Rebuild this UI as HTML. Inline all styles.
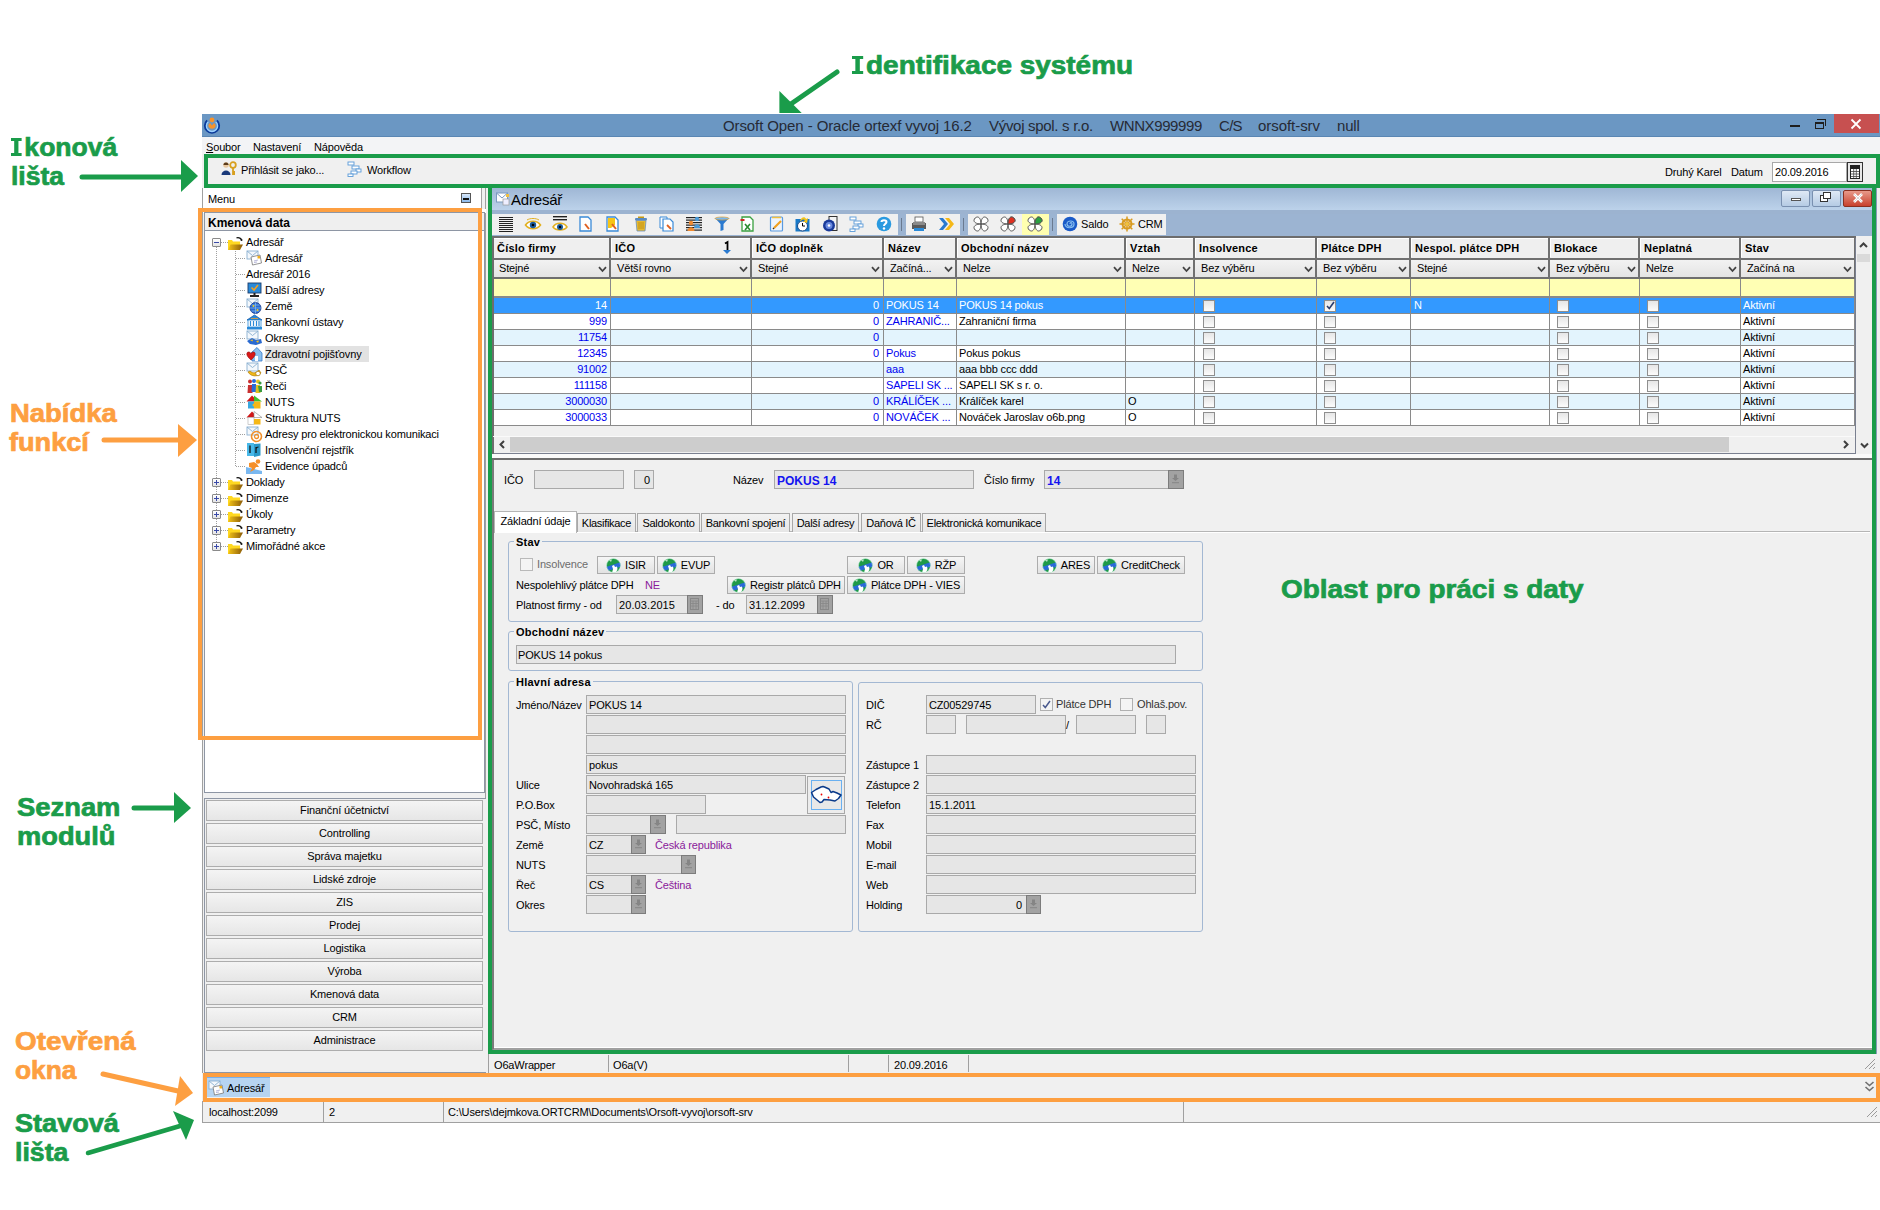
<!DOCTYPE html><html><head><meta charset="utf-8"><style>
html,body{margin:0;padding:0;width:1880px;height:1210px;overflow:hidden;background:#fff;font-family:'Liberation Sans', sans-serif;}
.a{position:absolute;box-sizing:border-box}
.t{white-space:pre}
svg{position:absolute;overflow:visible}
</style></head><body>
<div class="a" style="left:202px;top:114px;width:1678px;height:23px;background:#6b97c3;border-bottom:1px solid #5a86b3"></div>
<svg class="a" style="left:203px;top:116px" width="18" height="18" viewBox="0 0 18 18">
<path d="M4.2 4.5A7 7 0 1 0 13.8 4.5" fill="none" stroke="#0a3a9a" stroke-width="2.2"/>
<path d="M5.2 5.8A5.6 5.6 0 1 0 12.8 5.8" fill="none" stroke="#9ad0ff" stroke-width="1.4"/>
<path d="M5.3 9.8A3.8 3.8 0 0 0 12.7 9.8A3.8 3.8 0 0 0 11 7L9 9.5L7 7A3.8 3.8 0 0 0 5.3 9.8Z" fill="#f7922a"/>
<circle cx="9" cy="4" r="2.4" fill="#f7922a"/></svg>
<div class="a t" style="left:723px;top:118px;font-size:15px;line-height:15px;font-weight:400;color:#262a35;letter-spacing:-0.1px">Orsoft Open - Oracle ortexf vyvoj 16.2</div>
<div class="a t" style="left:989px;top:118px;font-size:15px;line-height:15px;font-weight:400;color:#262a35;letter-spacing:-0.3px">Vývoj spol. s r.o.</div>
<div class="a t" style="left:1110px;top:118px;font-size:15px;line-height:15px;font-weight:400;color:#262a35;letter-spacing:-0.4px">WNNX999999</div>
<div class="a t" style="left:1219px;top:118px;font-size:15px;line-height:15px;font-weight:400;color:#262a35;letter-spacing:-0.7px">C/S</div>
<div class="a t" style="left:1258px;top:118px;font-size:15px;line-height:15px;font-weight:400;color:#262a35;letter-spacing:-0.05px">orsoft-srv</div>
<div class="a t" style="left:1337px;top:118px;font-size:15px;line-height:15px;font-weight:400;color:#262a35;letter-spacing:-0.2px">null</div>
<div class="a" style="left:1790px;top:125px;width:10px;height:2px;background:#1e1e1e"></div>
<div class="a" style="left:1815px;top:122px;width:9px;height:7px;border:1px solid #1e1e1e;border-top-width:2px"></div>
<div class="a" style="left:1817px;top:119px;width:9px;height:7px;border-top:1px solid #1e1e1e;border-right:1px solid #1e1e1e"></div>
<div class="a" style="left:1834px;top:114px;width:45px;height:19px;background:#c75050"></div>
<svg class="a" style="left:1850px;top:118px" width="12" height="12" viewBox="0 0 12 12"><path d="M1.5 1.5L10.5 10.5M10.5 1.5L1.5 10.5" stroke="#fff" stroke-width="1.8"/></svg>
<div class="a" style="left:202px;top:137px;width:1678px;height:17px;background:#f3f4f6"></div>
<div class="a t" style="left:206px;top:142px;font-size:11px;line-height:11px;font-weight:400;color:#000;letter-spacing:-0.15px;"><u>S</u>oubor</div>
<div class="a t" style="left:253px;top:142px;font-size:11px;line-height:11px;font-weight:400;color:#000;letter-spacing:-0.15px;">Nastavení</div>
<div class="a t" style="left:314px;top:142px;font-size:11px;line-height:11px;font-weight:400;color:#000;letter-spacing:-0.15px;">Nápověda</div>
<div class="a" style="left:202px;top:154px;width:1678px;height:34px;background:#f0f0f0"></div>
<div class="a t" style="left:241px;top:165px;font-size:11px;line-height:11px;font-weight:400;color:#000;letter-spacing:-0.15px;">Přihlásit se jako...</div>
<div class="a t" style="left:367px;top:165px;font-size:11px;line-height:11px;font-weight:400;color:#000;letter-spacing:-0.15px;">Workflow</div>
<div class="a t" style="left:1665px;top:167px;font-size:11px;line-height:11px;font-weight:400;color:#000;letter-spacing:-0.15px;">Druhý Karel</div>
<div class="a t" style="left:1731px;top:167px;font-size:11px;line-height:11px;font-weight:400;color:#000;letter-spacing:-0.15px;">Datum</div>
<div class="a" style="left:1772px;top:162px;width:75px;height:20px;background:#fff;border:1px solid #a8a8a8"></div>
<div class="a t" style="left:1775px;top:167px;font-size:11px;line-height:11px;font-weight:400;color:#000;letter-spacing:-0.15px;">20.09.2016</div>
<div class="a" style="left:1847px;top:162px;width:16px;height:20px;background:#e8e8e8;border:1px solid #333"></div>
<div class="a" style="left:202px;top:188px;width:1678px;height:935px;background:#f0f0f0"></div>
<div class="a" style="left:202px;top:188px;width:284px;height:885px;background:#f0f0f0;border-left:1px solid #a0a0a0;border-right:1px solid #a0a0a0"></div>
<div class="a" style="left:203px;top:188px;width:279px;height:21px;background:#fff;border-right:1px solid #a0a0a0"></div>
<div class="a t" style="left:208px;top:194px;font-size:11px;line-height:11px;font-weight:400;color:#000;letter-spacing:-0.15px;">Menu</div>
<div class="a" style="left:461px;top:193px;width:10px;height:10px;background:linear-gradient(#d8e8fa,#8ab8ea);border:1px solid #555"></div>
<div class="a" style="left:463px;top:198px;width:6px;height:2px;background:#111"></div>
<div class="a" style="left:203px;top:209px;width:283px;height:4px;background:#fff"></div>
<div class="a" style="left:204px;top:212px;width:281px;height:581px;background:#fff;border:1px solid #8e96a4"></div>
<div class="a" style="left:205px;top:213px;width:279px;height:18px;background:#efefef;border-bottom:1px solid #8e96a4"></div>
<div class="a t" style="left:208px;top:217px;font-size:12px;line-height:12px;font-weight:700;color:#000;">Kmenová data</div>
<div class="a" style="left:204px;top:798px;width:282px;height:275px;background:#f0f0f0;border:1px solid #8e96a4;border-right:none"></div>
<div class="a" style="left:206px;top:800px;width:277px;height:21px;background:linear-gradient(#f4f4f4,#e6e6e6);border:1px solid #adadad"></div>
<div class="a t" style="left:206px;top:805px;width:277px;text-align:center;font-size:11px;line-height:11px;font-weight:400;color:#000;letter-spacing:-0.15px;">Finanční účetnictví</div>
<div class="a" style="left:206px;top:823px;width:277px;height:21px;background:linear-gradient(#f4f4f4,#e6e6e6);border:1px solid #adadad"></div>
<div class="a t" style="left:206px;top:828px;width:277px;text-align:center;font-size:11px;line-height:11px;font-weight:400;color:#000;letter-spacing:-0.15px;">Controlling</div>
<div class="a" style="left:206px;top:846px;width:277px;height:21px;background:linear-gradient(#f4f4f4,#e6e6e6);border:1px solid #adadad"></div>
<div class="a t" style="left:206px;top:851px;width:277px;text-align:center;font-size:11px;line-height:11px;font-weight:400;color:#000;letter-spacing:-0.15px;">Správa majetku</div>
<div class="a" style="left:206px;top:869px;width:277px;height:21px;background:linear-gradient(#f4f4f4,#e6e6e6);border:1px solid #adadad"></div>
<div class="a t" style="left:206px;top:874px;width:277px;text-align:center;font-size:11px;line-height:11px;font-weight:400;color:#000;letter-spacing:-0.15px;">Lidské zdroje</div>
<div class="a" style="left:206px;top:892px;width:277px;height:21px;background:linear-gradient(#f4f4f4,#e6e6e6);border:1px solid #adadad"></div>
<div class="a t" style="left:206px;top:897px;width:277px;text-align:center;font-size:11px;line-height:11px;font-weight:400;color:#000;letter-spacing:-0.15px;">ZIS</div>
<div class="a" style="left:206px;top:915px;width:277px;height:21px;background:linear-gradient(#f4f4f4,#e6e6e6);border:1px solid #adadad"></div>
<div class="a t" style="left:206px;top:920px;width:277px;text-align:center;font-size:11px;line-height:11px;font-weight:400;color:#000;letter-spacing:-0.15px;">Prodej</div>
<div class="a" style="left:206px;top:938px;width:277px;height:21px;background:linear-gradient(#f4f4f4,#e6e6e6);border:1px solid #adadad"></div>
<div class="a t" style="left:206px;top:943px;width:277px;text-align:center;font-size:11px;line-height:11px;font-weight:400;color:#000;letter-spacing:-0.15px;">Logistika</div>
<div class="a" style="left:206px;top:961px;width:277px;height:21px;background:linear-gradient(#f4f4f4,#e6e6e6);border:1px solid #adadad"></div>
<div class="a t" style="left:206px;top:966px;width:277px;text-align:center;font-size:11px;line-height:11px;font-weight:400;color:#000;letter-spacing:-0.15px;">Výroba</div>
<div class="a" style="left:206px;top:984px;width:277px;height:21px;background:linear-gradient(#f4f4f4,#e6e6e6);border:1px solid #adadad"></div>
<div class="a t" style="left:206px;top:989px;width:277px;text-align:center;font-size:11px;line-height:11px;font-weight:400;color:#000;letter-spacing:-0.15px;">Kmenová data</div>
<div class="a" style="left:206px;top:1007px;width:277px;height:21px;background:linear-gradient(#f4f4f4,#e6e6e6);border:1px solid #adadad"></div>
<div class="a t" style="left:206px;top:1012px;width:277px;text-align:center;font-size:11px;line-height:11px;font-weight:400;color:#000;letter-spacing:-0.15px;">CRM</div>
<div class="a" style="left:206px;top:1030px;width:277px;height:21px;background:linear-gradient(#f4f4f4,#e6e6e6);border:1px solid #adadad"></div>
<div class="a t" style="left:206px;top:1035px;width:277px;text-align:center;font-size:11px;line-height:11px;font-weight:400;color:#000;letter-spacing:-0.15px;">Administrace</div>
<div class="a" style="left:488px;top:188px;width:1392px;height:867px;background:#f0f0f0"></div>
<div class="a" style="left:492px;top:188px;width:1380px;height:22px;background:linear-gradient(#9fb7d5,#bcd2ea)"></div>
<div class="a" style="left:492px;top:210px;width:1380px;height:4px;background:#9cb3d0"></div>
<div class="a t" style="left:511px;top:192px;font-size:15px;line-height:15px;font-weight:400;color:#000;letter-spacing:-0.2px">Adresář</div>
<div class="a" style="left:1781px;top:190px;width:29px;height:17px;background:linear-gradient(#dfe9f5,#b5cbe4);border:1px solid #7990b0;border-radius:2px"></div>
<div class="a" style="left:1812px;top:190px;width:29px;height:17px;background:linear-gradient(#dfe9f5,#b5cbe4);border:1px solid #7990b0;border-radius:2px"></div>
<div class="a" style="left:1843px;top:190px;width:29px;height:17px;background:linear-gradient(#e89a8a,#c8412d);border:1px solid #8a3020;border-radius:2px"></div>
<div class="a" style="left:1791px;top:198px;width:10px;height:3px;background:#fff;border:1px solid #555"></div>
<svg class="a" style="left:1852px;top:192px" width="12" height="12" viewBox="0 0 12 12"><path d="M2 2L10 10M10 2L2 10" stroke="#fff" stroke-width="2.6"/><path d="M2 2L10 10M10 2L2 10" stroke="#333" stroke-width="0.6" opacity="0.3"/></svg>
<div class="a" style="left:1820px;top:195px;width:8px;height:7px;border:1px solid #333;background:#fff"></div>
<div class="a" style="left:1823px;top:192px;width:8px;height:7px;border:1px solid #333;background:#fff"></div>
<div class="a" style="left:492px;top:214px;width:1380px;height:24px;background:#9cb4d2;border-bottom:2px solid #6d6d6d"></div>
<div class="a" style="left:492px;top:214px;width:406px;height:21px;background:#f0f0f0"></div>
<div class="a" style="left:906px;top:214px;width:54px;height:21px;background:#f0f0f0"></div>
<div class="a" style="left:968px;top:214px;width:81px;height:21px;background:#f0f0f0"></div>
<div class="a" style="left:1057px;top:214px;width:109px;height:21px;background:#f0f0f0"></div>
<div class="a" style="left:492px;top:236px;width:1380px;height:222px;background:#f0f0f0"></div>
<div class="a" style="left:492px;top:236px;width:1364px;height:2px;background:#6d6d6d"></div>
<div class="a" style="left:493px;top:238px;width:1362px;height:22px;background:#efefef;border-bottom:2px solid #6f6f6f"></div>
<div class="a" style="left:493px;top:260px;width:1362px;height:19px;background:linear-gradient(#f2f2f2,#e4e4e4);border-bottom:2px solid #6f6f6f"></div>
<div class="a" style="left:493px;top:238px;width:1px;height:19px;background:#fff"></div>
<div class="a" style="left:493px;top:238px;width:117px;height:1px;background:#fff"></div>
<div class="a t" style="left:497px;top:243px;font-size:11px;line-height:11px;font-weight:700;color:#000;letter-spacing:0.2px;">Číslo firmy</div>
<div class="a t" style="left:499px;top:263px;font-size:11px;line-height:11px;font-weight:400;color:#000;letter-spacing:-0.15px;">Stejné</div>
<svg class="a" style="left:598px;top:266px" width="9" height="7" viewBox="0 0 9 7"><path d="M1 1.2L4.5 5L8 1.2" fill="none" stroke="#444" stroke-width="1.8"/></svg>
<div class="a" style="left:611px;top:238px;width:1px;height:19px;background:#fff"></div>
<div class="a" style="left:611px;top:238px;width:140px;height:1px;background:#fff"></div>
<div class="a" style="left:609px;top:238px;width:2px;height:41px;background:#707070"></div>
<div class="a t" style="left:615px;top:243px;font-size:11px;line-height:11px;font-weight:700;color:#000;letter-spacing:0.2px;">IČO</div>
<div class="a t" style="left:617px;top:263px;font-size:11px;line-height:11px;font-weight:400;color:#000;letter-spacing:-0.15px;">Větší rovno</div>
<svg class="a" style="left:739px;top:266px" width="9" height="7" viewBox="0 0 9 7"><path d="M1 1.2L4.5 5L8 1.2" fill="none" stroke="#444" stroke-width="1.8"/></svg>
<div class="a" style="left:752px;top:238px;width:1px;height:19px;background:#fff"></div>
<div class="a" style="left:752px;top:238px;width:131px;height:1px;background:#fff"></div>
<div class="a" style="left:750px;top:238px;width:2px;height:41px;background:#707070"></div>
<div class="a t" style="left:756px;top:243px;font-size:11px;line-height:11px;font-weight:700;color:#000;letter-spacing:0.2px;">IČO doplněk</div>
<div class="a t" style="left:758px;top:263px;font-size:11px;line-height:11px;font-weight:400;color:#000;letter-spacing:-0.15px;">Stejné</div>
<svg class="a" style="left:871px;top:266px" width="9" height="7" viewBox="0 0 9 7"><path d="M1 1.2L4.5 5L8 1.2" fill="none" stroke="#444" stroke-width="1.8"/></svg>
<div class="a" style="left:884px;top:238px;width:1px;height:19px;background:#fff"></div>
<div class="a" style="left:884px;top:238px;width:72px;height:1px;background:#fff"></div>
<div class="a" style="left:882px;top:238px;width:2px;height:41px;background:#707070"></div>
<div class="a t" style="left:888px;top:243px;font-size:11px;line-height:11px;font-weight:700;color:#000;letter-spacing:0.2px;">Název</div>
<div class="a t" style="left:890px;top:263px;font-size:11px;line-height:11px;font-weight:400;color:#000;letter-spacing:-0.15px;">Začíná...</div>
<svg class="a" style="left:944px;top:266px" width="9" height="7" viewBox="0 0 9 7"><path d="M1 1.2L4.5 5L8 1.2" fill="none" stroke="#444" stroke-width="1.8"/></svg>
<div class="a" style="left:957px;top:238px;width:1px;height:19px;background:#fff"></div>
<div class="a" style="left:957px;top:238px;width:168px;height:1px;background:#fff"></div>
<div class="a" style="left:955px;top:238px;width:2px;height:41px;background:#707070"></div>
<div class="a t" style="left:961px;top:243px;font-size:11px;line-height:11px;font-weight:700;color:#000;letter-spacing:0.2px;">Obchodní název</div>
<div class="a t" style="left:963px;top:263px;font-size:11px;line-height:11px;font-weight:400;color:#000;letter-spacing:-0.15px;">Nelze</div>
<svg class="a" style="left:1113px;top:266px" width="9" height="7" viewBox="0 0 9 7"><path d="M1 1.2L4.5 5L8 1.2" fill="none" stroke="#444" stroke-width="1.8"/></svg>
<div class="a" style="left:1126px;top:238px;width:1px;height:19px;background:#fff"></div>
<div class="a" style="left:1126px;top:238px;width:68px;height:1px;background:#fff"></div>
<div class="a" style="left:1124px;top:238px;width:2px;height:41px;background:#707070"></div>
<div class="a t" style="left:1130px;top:243px;font-size:11px;line-height:11px;font-weight:700;color:#000;letter-spacing:0.2px;">Vztah</div>
<div class="a t" style="left:1132px;top:263px;font-size:11px;line-height:11px;font-weight:400;color:#000;letter-spacing:-0.15px;">Nelze</div>
<svg class="a" style="left:1182px;top:266px" width="9" height="7" viewBox="0 0 9 7"><path d="M1 1.2L4.5 5L8 1.2" fill="none" stroke="#444" stroke-width="1.8"/></svg>
<div class="a" style="left:1195px;top:238px;width:1px;height:19px;background:#fff"></div>
<div class="a" style="left:1195px;top:238px;width:121px;height:1px;background:#fff"></div>
<div class="a" style="left:1193px;top:238px;width:2px;height:41px;background:#707070"></div>
<div class="a t" style="left:1199px;top:243px;font-size:11px;line-height:11px;font-weight:700;color:#000;letter-spacing:0.2px;">Insolvence</div>
<div class="a t" style="left:1201px;top:263px;font-size:11px;line-height:11px;font-weight:400;color:#000;letter-spacing:-0.15px;">Bez výběru</div>
<svg class="a" style="left:1304px;top:266px" width="9" height="7" viewBox="0 0 9 7"><path d="M1 1.2L4.5 5L8 1.2" fill="none" stroke="#444" stroke-width="1.8"/></svg>
<div class="a" style="left:1317px;top:238px;width:1px;height:19px;background:#fff"></div>
<div class="a" style="left:1317px;top:238px;width:93px;height:1px;background:#fff"></div>
<div class="a" style="left:1315px;top:238px;width:2px;height:41px;background:#707070"></div>
<div class="a t" style="left:1321px;top:243px;font-size:11px;line-height:11px;font-weight:700;color:#000;letter-spacing:0.2px;">Plátce DPH</div>
<div class="a t" style="left:1323px;top:263px;font-size:11px;line-height:11px;font-weight:400;color:#000;letter-spacing:-0.15px;">Bez výběru</div>
<svg class="a" style="left:1398px;top:266px" width="9" height="7" viewBox="0 0 9 7"><path d="M1 1.2L4.5 5L8 1.2" fill="none" stroke="#444" stroke-width="1.8"/></svg>
<div class="a" style="left:1411px;top:238px;width:1px;height:19px;background:#fff"></div>
<div class="a" style="left:1411px;top:238px;width:138px;height:1px;background:#fff"></div>
<div class="a" style="left:1409px;top:238px;width:2px;height:41px;background:#707070"></div>
<div class="a t" style="left:1415px;top:243px;font-size:11px;line-height:11px;font-weight:700;color:#000;letter-spacing:0.2px;">Nespol. plátce DPH</div>
<div class="a t" style="left:1417px;top:263px;font-size:11px;line-height:11px;font-weight:400;color:#000;letter-spacing:-0.15px;">Stejné</div>
<svg class="a" style="left:1537px;top:266px" width="9" height="7" viewBox="0 0 9 7"><path d="M1 1.2L4.5 5L8 1.2" fill="none" stroke="#444" stroke-width="1.8"/></svg>
<div class="a" style="left:1550px;top:238px;width:1px;height:19px;background:#fff"></div>
<div class="a" style="left:1550px;top:238px;width:89px;height:1px;background:#fff"></div>
<div class="a" style="left:1548px;top:238px;width:2px;height:41px;background:#707070"></div>
<div class="a t" style="left:1554px;top:243px;font-size:11px;line-height:11px;font-weight:700;color:#000;letter-spacing:0.2px;">Blokace</div>
<div class="a t" style="left:1556px;top:263px;font-size:11px;line-height:11px;font-weight:400;color:#000;letter-spacing:-0.15px;">Bez výběru</div>
<svg class="a" style="left:1627px;top:266px" width="9" height="7" viewBox="0 0 9 7"><path d="M1 1.2L4.5 5L8 1.2" fill="none" stroke="#444" stroke-width="1.8"/></svg>
<div class="a" style="left:1640px;top:238px;width:1px;height:19px;background:#fff"></div>
<div class="a" style="left:1640px;top:238px;width:100px;height:1px;background:#fff"></div>
<div class="a" style="left:1638px;top:238px;width:2px;height:41px;background:#707070"></div>
<div class="a t" style="left:1644px;top:243px;font-size:11px;line-height:11px;font-weight:700;color:#000;letter-spacing:0.2px;">Neplatná</div>
<div class="a t" style="left:1646px;top:263px;font-size:11px;line-height:11px;font-weight:400;color:#000;letter-spacing:-0.15px;">Nelze</div>
<svg class="a" style="left:1728px;top:266px" width="9" height="7" viewBox="0 0 9 7"><path d="M1 1.2L4.5 5L8 1.2" fill="none" stroke="#444" stroke-width="1.8"/></svg>
<div class="a" style="left:1741px;top:238px;width:1px;height:19px;background:#fff"></div>
<div class="a" style="left:1741px;top:238px;width:114px;height:1px;background:#fff"></div>
<div class="a" style="left:1739px;top:238px;width:2px;height:41px;background:#707070"></div>
<div class="a t" style="left:1745px;top:243px;font-size:11px;line-height:11px;font-weight:700;color:#000;letter-spacing:0.2px;">Stav</div>
<div class="a t" style="left:1747px;top:263px;font-size:11px;line-height:11px;font-weight:400;color:#000;letter-spacing:-0.15px;">Začíná na</div>
<svg class="a" style="left:1843px;top:266px" width="9" height="7" viewBox="0 0 9 7"><path d="M1 1.2L4.5 5L8 1.2" fill="none" stroke="#444" stroke-width="1.8"/></svg>
<div class="a" style="left:1854px;top:238px;width:2px;height:41px;background:#707070"></div>
<svg class="a" style="left:722px;top:241px" width="10" height="15" viewBox="0 0 10 15"><path d="M3 2.5L5.5 1V9" fill="none" stroke="#000" stroke-width="1.8"/><path d="M1 9H9L5 13Z" fill="#2a7ad0"/></svg>
<div class="a" style="left:493px;top:279px;width:1362px;height:19px;background:#ffffb4;border-bottom:2px solid #8a8a8a"></div>
<div class="a" style="left:493px;top:298px;width:1362px;height:16px;background:#8a8a8a"></div>
<div class="a" style="left:493px;top:298px;width:1362px;height:15px;background:#3399ff"></div>
<div class="a t" style="right:1273px;top:300px;text-align:right;font-size:11px;line-height:11px;font-weight:400;color:#fff;letter-spacing:-0.15px;">14</div>
<div class="a t" style="right:1001px;top:300px;text-align:right;font-size:11px;line-height:11px;font-weight:400;color:#fff;letter-spacing:-0.15px;">0</div>
<div class="a t" style="left:886px;top:300px;font-size:11px;line-height:11px;font-weight:400;color:#fff;letter-spacing:-0.15px;">POKUS 14</div>
<div class="a t" style="left:959px;top:300px;font-size:11px;line-height:11px;font-weight:400;color:#fff;letter-spacing:-0.15px;">POKUS 14 pokus</div>
<div class="a t" style="left:1414px;top:300px;font-size:11px;line-height:11px;font-weight:400;color:#fff;letter-spacing:-0.15px;">N</div>
<div class="a t" style="left:1743px;top:300px;font-size:11px;line-height:11px;font-weight:400;color:#fff;letter-spacing:-0.15px;">Aktivní</div>
<div class="a" style="left:1203px;top:300px;width:12px;height:12px;background:linear-gradient(#e6e6e6,#fcfcfc);border:1px solid #8f8f8f"></div>
<div class="a" style="left:1324px;top:300px;width:12px;height:12px;background:linear-gradient(#e6e6e6,#fcfcfc);border:1px solid #8f8f8f"></div>
<svg class="a" style="left:1326px;top:301px" width="9" height="9" viewBox="0 0 9 9"><path d="M1 5L3.3 7.5L8 1" fill="none" stroke="#2a3c6e" stroke-width="1.6"/></svg>
<div class="a" style="left:1557px;top:300px;width:12px;height:12px;background:linear-gradient(#e6e6e6,#fcfcfc);border:1px solid #8f8f8f"></div>
<div class="a" style="left:1647px;top:300px;width:12px;height:12px;background:linear-gradient(#e6e6e6,#fcfcfc);border:1px solid #8f8f8f"></div>
<div class="a" style="left:493px;top:314px;width:1362px;height:16px;background:#8a8a8a"></div>
<div class="a" style="left:493px;top:314px;width:1362px;height:15px;background:#ffffff"></div>
<div class="a t" style="right:1273px;top:316px;text-align:right;font-size:11px;line-height:11px;font-weight:400;color:#0000f0;letter-spacing:-0.15px;">999</div>
<div class="a t" style="right:1001px;top:316px;text-align:right;font-size:11px;line-height:11px;font-weight:400;color:#0000f0;letter-spacing:-0.15px;">0</div>
<div class="a t" style="left:886px;top:316px;font-size:11px;line-height:11px;font-weight:400;color:#0000f0;letter-spacing:-0.15px;">ZAHRANIČ...</div>
<div class="a t" style="left:959px;top:316px;font-size:11px;line-height:11px;font-weight:400;color:#000;letter-spacing:-0.15px;">Zahraniční firma</div>
<div class="a t" style="left:1743px;top:316px;font-size:11px;line-height:11px;font-weight:400;color:#000;letter-spacing:-0.15px;">Aktivní</div>
<div class="a" style="left:1203px;top:316px;width:12px;height:12px;background:linear-gradient(#e6e6e6,#fcfcfc);border:1px solid #8f8f8f"></div>
<div class="a" style="left:1324px;top:316px;width:12px;height:12px;background:linear-gradient(#e6e6e6,#fcfcfc);border:1px solid #8f8f8f"></div>
<div class="a" style="left:1557px;top:316px;width:12px;height:12px;background:linear-gradient(#e6e6e6,#fcfcfc);border:1px solid #8f8f8f"></div>
<div class="a" style="left:1647px;top:316px;width:12px;height:12px;background:linear-gradient(#e6e6e6,#fcfcfc);border:1px solid #8f8f8f"></div>
<div class="a" style="left:493px;top:330px;width:1362px;height:16px;background:#8a8a8a"></div>
<div class="a" style="left:493px;top:330px;width:1362px;height:15px;background:#e3f4fd"></div>
<div class="a t" style="right:1273px;top:332px;text-align:right;font-size:11px;line-height:11px;font-weight:400;color:#0000f0;letter-spacing:-0.15px;">11754</div>
<div class="a t" style="right:1001px;top:332px;text-align:right;font-size:11px;line-height:11px;font-weight:400;color:#0000f0;letter-spacing:-0.15px;">0</div>
<div class="a t" style="left:1743px;top:332px;font-size:11px;line-height:11px;font-weight:400;color:#000;letter-spacing:-0.15px;">Aktivní</div>
<div class="a" style="left:1203px;top:332px;width:12px;height:12px;background:linear-gradient(#e6e6e6,#fcfcfc);border:1px solid #8f8f8f"></div>
<div class="a" style="left:1324px;top:332px;width:12px;height:12px;background:linear-gradient(#e6e6e6,#fcfcfc);border:1px solid #8f8f8f"></div>
<div class="a" style="left:1557px;top:332px;width:12px;height:12px;background:linear-gradient(#e6e6e6,#fcfcfc);border:1px solid #8f8f8f"></div>
<div class="a" style="left:1647px;top:332px;width:12px;height:12px;background:linear-gradient(#e6e6e6,#fcfcfc);border:1px solid #8f8f8f"></div>
<div class="a" style="left:493px;top:346px;width:1362px;height:16px;background:#8a8a8a"></div>
<div class="a" style="left:493px;top:346px;width:1362px;height:15px;background:#ffffff"></div>
<div class="a t" style="right:1273px;top:348px;text-align:right;font-size:11px;line-height:11px;font-weight:400;color:#0000f0;letter-spacing:-0.15px;">12345</div>
<div class="a t" style="right:1001px;top:348px;text-align:right;font-size:11px;line-height:11px;font-weight:400;color:#0000f0;letter-spacing:-0.15px;">0</div>
<div class="a t" style="left:886px;top:348px;font-size:11px;line-height:11px;font-weight:400;color:#0000f0;letter-spacing:-0.15px;">Pokus</div>
<div class="a t" style="left:959px;top:348px;font-size:11px;line-height:11px;font-weight:400;color:#000;letter-spacing:-0.15px;">Pokus pokus</div>
<div class="a t" style="left:1743px;top:348px;font-size:11px;line-height:11px;font-weight:400;color:#000;letter-spacing:-0.15px;">Aktivní</div>
<div class="a" style="left:1203px;top:348px;width:12px;height:12px;background:linear-gradient(#e6e6e6,#fcfcfc);border:1px solid #8f8f8f"></div>
<div class="a" style="left:1324px;top:348px;width:12px;height:12px;background:linear-gradient(#e6e6e6,#fcfcfc);border:1px solid #8f8f8f"></div>
<div class="a" style="left:1557px;top:348px;width:12px;height:12px;background:linear-gradient(#e6e6e6,#fcfcfc);border:1px solid #8f8f8f"></div>
<div class="a" style="left:1647px;top:348px;width:12px;height:12px;background:linear-gradient(#e6e6e6,#fcfcfc);border:1px solid #8f8f8f"></div>
<div class="a" style="left:493px;top:362px;width:1362px;height:16px;background:#8a8a8a"></div>
<div class="a" style="left:493px;top:362px;width:1362px;height:15px;background:#e3f4fd"></div>
<div class="a t" style="right:1273px;top:364px;text-align:right;font-size:11px;line-height:11px;font-weight:400;color:#0000f0;letter-spacing:-0.15px;">91002</div>
<div class="a t" style="left:886px;top:364px;font-size:11px;line-height:11px;font-weight:400;color:#0000f0;letter-spacing:-0.15px;">aaa</div>
<div class="a t" style="left:959px;top:364px;font-size:11px;line-height:11px;font-weight:400;color:#000;letter-spacing:-0.15px;">aaa bbb ccc ddd</div>
<div class="a t" style="left:1743px;top:364px;font-size:11px;line-height:11px;font-weight:400;color:#000;letter-spacing:-0.15px;">Aktivní</div>
<div class="a" style="left:1203px;top:364px;width:12px;height:12px;background:linear-gradient(#e6e6e6,#fcfcfc);border:1px solid #8f8f8f"></div>
<div class="a" style="left:1324px;top:364px;width:12px;height:12px;background:linear-gradient(#e6e6e6,#fcfcfc);border:1px solid #8f8f8f"></div>
<div class="a" style="left:1557px;top:364px;width:12px;height:12px;background:linear-gradient(#e6e6e6,#fcfcfc);border:1px solid #8f8f8f"></div>
<div class="a" style="left:1647px;top:364px;width:12px;height:12px;background:linear-gradient(#e6e6e6,#fcfcfc);border:1px solid #8f8f8f"></div>
<div class="a" style="left:493px;top:378px;width:1362px;height:16px;background:#8a8a8a"></div>
<div class="a" style="left:493px;top:378px;width:1362px;height:15px;background:#ffffff"></div>
<div class="a t" style="right:1273px;top:380px;text-align:right;font-size:11px;line-height:11px;font-weight:400;color:#0000f0;letter-spacing:-0.15px;">111158</div>
<div class="a t" style="left:886px;top:380px;font-size:11px;line-height:11px;font-weight:400;color:#0000f0;letter-spacing:-0.15px;">SAPELI SK ...</div>
<div class="a t" style="left:959px;top:380px;font-size:11px;line-height:11px;font-weight:400;color:#000;letter-spacing:-0.15px;">SAPELI SK s r. o.</div>
<div class="a t" style="left:1743px;top:380px;font-size:11px;line-height:11px;font-weight:400;color:#000;letter-spacing:-0.15px;">Aktivní</div>
<div class="a" style="left:1203px;top:380px;width:12px;height:12px;background:linear-gradient(#e6e6e6,#fcfcfc);border:1px solid #8f8f8f"></div>
<div class="a" style="left:1324px;top:380px;width:12px;height:12px;background:linear-gradient(#e6e6e6,#fcfcfc);border:1px solid #8f8f8f"></div>
<div class="a" style="left:1557px;top:380px;width:12px;height:12px;background:linear-gradient(#e6e6e6,#fcfcfc);border:1px solid #8f8f8f"></div>
<div class="a" style="left:1647px;top:380px;width:12px;height:12px;background:linear-gradient(#e6e6e6,#fcfcfc);border:1px solid #8f8f8f"></div>
<div class="a" style="left:493px;top:394px;width:1362px;height:16px;background:#8a8a8a"></div>
<div class="a" style="left:493px;top:394px;width:1362px;height:15px;background:#e3f4fd"></div>
<div class="a t" style="right:1273px;top:396px;text-align:right;font-size:11px;line-height:11px;font-weight:400;color:#0000f0;letter-spacing:-0.15px;">3000030</div>
<div class="a t" style="right:1001px;top:396px;text-align:right;font-size:11px;line-height:11px;font-weight:400;color:#0000f0;letter-spacing:-0.15px;">0</div>
<div class="a t" style="left:886px;top:396px;font-size:11px;line-height:11px;font-weight:400;color:#0000f0;letter-spacing:-0.15px;">KRÁLÍČEK ...</div>
<div class="a t" style="left:959px;top:396px;font-size:11px;line-height:11px;font-weight:400;color:#000;letter-spacing:-0.15px;">Králíček karel</div>
<div class="a t" style="left:1128px;top:396px;font-size:11px;line-height:11px;font-weight:400;color:#000;letter-spacing:-0.15px;">O</div>
<div class="a t" style="left:1743px;top:396px;font-size:11px;line-height:11px;font-weight:400;color:#000;letter-spacing:-0.15px;">Aktivní</div>
<div class="a" style="left:1203px;top:396px;width:12px;height:12px;background:linear-gradient(#e6e6e6,#fcfcfc);border:1px solid #8f8f8f"></div>
<div class="a" style="left:1324px;top:396px;width:12px;height:12px;background:linear-gradient(#e6e6e6,#fcfcfc);border:1px solid #8f8f8f"></div>
<div class="a" style="left:1557px;top:396px;width:12px;height:12px;background:linear-gradient(#e6e6e6,#fcfcfc);border:1px solid #8f8f8f"></div>
<div class="a" style="left:1647px;top:396px;width:12px;height:12px;background:linear-gradient(#e6e6e6,#fcfcfc);border:1px solid #8f8f8f"></div>
<div class="a" style="left:493px;top:410px;width:1362px;height:16px;background:#8a8a8a"></div>
<div class="a" style="left:493px;top:410px;width:1362px;height:15px;background:#ffffff"></div>
<div class="a t" style="right:1273px;top:412px;text-align:right;font-size:11px;line-height:11px;font-weight:400;color:#0000f0;letter-spacing:-0.15px;">3000033</div>
<div class="a t" style="right:1001px;top:412px;text-align:right;font-size:11px;line-height:11px;font-weight:400;color:#0000f0;letter-spacing:-0.15px;">0</div>
<div class="a t" style="left:886px;top:412px;font-size:11px;line-height:11px;font-weight:400;color:#0000f0;letter-spacing:-0.15px;">NOVÁČEK ...</div>
<div class="a t" style="left:959px;top:412px;font-size:11px;line-height:11px;font-weight:400;color:#000;letter-spacing:-0.15px;">Nováček Jaroslav o6b.png</div>
<div class="a t" style="left:1128px;top:412px;font-size:11px;line-height:11px;font-weight:400;color:#000;letter-spacing:-0.15px;">O</div>
<div class="a t" style="left:1743px;top:412px;font-size:11px;line-height:11px;font-weight:400;color:#000;letter-spacing:-0.15px;">Aktivní</div>
<div class="a" style="left:1203px;top:412px;width:12px;height:12px;background:linear-gradient(#e6e6e6,#fcfcfc);border:1px solid #8f8f8f"></div>
<div class="a" style="left:1324px;top:412px;width:12px;height:12px;background:linear-gradient(#e6e6e6,#fcfcfc);border:1px solid #8f8f8f"></div>
<div class="a" style="left:1557px;top:412px;width:12px;height:12px;background:linear-gradient(#e6e6e6,#fcfcfc);border:1px solid #8f8f8f"></div>
<div class="a" style="left:1647px;top:412px;width:12px;height:12px;background:linear-gradient(#e6e6e6,#fcfcfc);border:1px solid #8f8f8f"></div>
<div class="a" style="left:610px;top:279px;width:1px;height:146px;background:#8a8a8a"></div>
<div class="a" style="left:751px;top:279px;width:1px;height:146px;background:#8a8a8a"></div>
<div class="a" style="left:883px;top:279px;width:1px;height:146px;background:#8a8a8a"></div>
<div class="a" style="left:956px;top:279px;width:1px;height:146px;background:#8a8a8a"></div>
<div class="a" style="left:1125px;top:279px;width:1px;height:146px;background:#8a8a8a"></div>
<div class="a" style="left:1194px;top:279px;width:1px;height:146px;background:#8a8a8a"></div>
<div class="a" style="left:1316px;top:279px;width:1px;height:146px;background:#8a8a8a"></div>
<div class="a" style="left:1410px;top:279px;width:1px;height:146px;background:#8a8a8a"></div>
<div class="a" style="left:1549px;top:279px;width:1px;height:146px;background:#8a8a8a"></div>
<div class="a" style="left:1639px;top:279px;width:1px;height:146px;background:#8a8a8a"></div>
<div class="a" style="left:1740px;top:279px;width:1px;height:146px;background:#8a8a8a"></div>
<div class="a" style="left:1854px;top:279px;width:1px;height:146px;background:#8a8a8a"></div>
<div class="a" style="left:493px;top:437px;width:1362px;height:15px;background:#f0f0f0"></div>
<div class="a" style="left:510px;top:437px;width:1219px;height:15px;background:#cdcdcd"></div>
<svg class="a" style="left:498px;top:440px" width="8" height="9" viewBox="0 0 8 9"><path d="M6 1L2.5 4.5L6 8" fill="none" stroke="#404040" stroke-width="2"/></svg>
<svg class="a" style="left:1842px;top:440px" width="8" height="9" viewBox="0 0 8 9"><path d="M2 1L5.5 4.5L2 8" fill="none" stroke="#404040" stroke-width="2"/></svg>
<div class="a" style="left:1856px;top:238px;width:15px;height:214px;background:#f0f0f0"></div>
<div class="a" style="left:1857px;top:254px;width:13px;height:8px;background:#dadada"></div>
<svg class="a" style="left:1859px;top:241px" width="9" height="8" viewBox="0 0 9 8"><path d="M1 6L4.5 2.5L8 6" fill="none" stroke="#404040" stroke-width="2"/></svg>
<svg class="a" style="left:1860px;top:442px" width="9" height="8" viewBox="0 0 9 8"><path d="M1 1.5L4.5 5L8 1.5" fill="none" stroke="#404040" stroke-width="2"/></svg>
<div class="a" style="left:492px;top:454px;width:1380px;height:6px;background:#fafafa;border-bottom:2px solid #6d6d6d"></div>
<div class="a" style="left:493px;top:453px;width:1363px;height:1px;background:#7a8090"></div>
<div class="a" style="left:492px;top:236px;width:2px;height:218px;background:#6d6d6d"></div>
<div class="a" style="left:1855px;top:238px;width:1px;height:216px;background:#7a8090"></div>
<div class="a" style="left:493px;top:436px;width:1362px;height:1px;background:#fafafa"></div>
<div class="a" style="left:1876px;top:188px;width:1px;height:866px;background:#8a9ab8"></div>
<div class="a" style="left:492px;top:460px;width:1380px;height:590px;background:#f0f0f0;border-left:2px solid #7a7a7a;border-bottom:1px solid #a0a0a0"></div>
<div class="a t" style="left:504px;top:475px;font-size:11px;line-height:11px;font-weight:400;color:#000;letter-spacing:-0.15px;">IČO</div>
<div class="a" style="left:534px;top:470px;width:90px;height:19px;background:#e6e6e6;border:1px solid #a9a9a9"></div>
<div class="a" style="left:634px;top:470px;width:20px;height:19px;background:#e6e6e6;border:1px solid #a9a9a9"></div>
<div class="a t" style="right:1230px;top:475px;text-align:right;font-size:11px;line-height:11px;font-weight:400;color:#000;letter-spacing:-0.15px;">0</div>
<div class="a t" style="left:733px;top:475px;font-size:11px;line-height:11px;font-weight:400;color:#000;letter-spacing:-0.15px;">Název</div>
<div class="a" style="left:774px;top:470px;width:200px;height:19px;background:#e6e6e6;border:1px solid #a9a9a9"></div>
<div class="a t" style="left:777px;top:475px;font-size:12px;line-height:12px;font-weight:700;color:#1414f0;">POKUS 14</div>
<div class="a t" style="left:984px;top:475px;font-size:11px;line-height:11px;font-weight:400;color:#000;letter-spacing:-0.15px;">Číslo firmy</div>
<div class="a" style="left:1044px;top:470px;width:125px;height:19px;background:#e6e6e6;border:1px solid #a9a9a9"></div>
<div class="a" style="left:1168px;top:470px;width:16px;height:19px;background:#a2a2a2;border:1px solid #7c7c7c"></div>
<svg class="a" style="left:1170px;top:474px" width="11" height="10" viewBox="0 0 11 10"><path d="M4 0.5H7V4H9L5.5 7L2 4H4Z" fill="#858585"/><path d="M2 8.7H9" stroke="#858585" stroke-width="1"/></svg>
<div class="a t" style="left:1047px;top:475px;font-size:12px;line-height:12px;font-weight:700;color:#1414f0;">14</div>
<div class="a" style="left:494px;top:531px;width:1376px;height:1px;background:#b5b5b5"></div>
<div class="a" style="left:494px;top:532px;width:1376px;height:515px;background:#f0f0f0;border-top:1px solid #fff"></div>
<div class="a" style="left:494px;top:1047px;width:1378px;height:1px;background:#fff"></div>
<div class="a" style="left:494px;top:1048px;width:1378px;height:2px;background:#a0a0a0"></div>
<div class="a" style="left:494px;top:511px;width:83px;height:22px;background:#fff;border:1px solid #b5b5b5;border-bottom:none"></div>
<div class="a t" style="left:494px;top:516px;width:83px;text-align:center;font-size:11px;line-height:11px;font-weight:400;color:#000;letter-spacing:-0.15px;">Základní údaje</div>
<div class="a" style="left:577px;top:513px;width:59px;height:19px;background:linear-gradient(#f2f2f2,#e6e6e6);border:1px solid #a8a8a8;border-bottom:none"></div>
<div class="a t" style="left:577px;top:518px;width:59px;text-align:center;font-size:11px;line-height:11px;font-weight:400;color:#000;letter-spacing:-0.15px;letter-spacing:-0.3px">Klasifikace</div>
<div class="a" style="left:637px;top:513px;width:63px;height:19px;background:linear-gradient(#f2f2f2,#e6e6e6);border:1px solid #a8a8a8;border-bottom:none"></div>
<div class="a t" style="left:637px;top:518px;width:63px;text-align:center;font-size:11px;line-height:11px;font-weight:400;color:#000;letter-spacing:-0.15px;letter-spacing:-0.3px">Saldokonto</div>
<div class="a" style="left:701px;top:513px;width:89px;height:19px;background:linear-gradient(#f2f2f2,#e6e6e6);border:1px solid #a8a8a8;border-bottom:none"></div>
<div class="a t" style="left:701px;top:518px;width:89px;text-align:center;font-size:11px;line-height:11px;font-weight:400;color:#000;letter-spacing:-0.15px;letter-spacing:-0.3px">Bankovní spojení</div>
<div class="a" style="left:792px;top:513px;width:67px;height:19px;background:linear-gradient(#f2f2f2,#e6e6e6);border:1px solid #a8a8a8;border-bottom:none"></div>
<div class="a t" style="left:792px;top:518px;width:67px;text-align:center;font-size:11px;line-height:11px;font-weight:400;color:#000;letter-spacing:-0.15px;letter-spacing:-0.3px">Další adresy</div>
<div class="a" style="left:861px;top:513px;width:60px;height:19px;background:linear-gradient(#f2f2f2,#e6e6e6);border:1px solid #a8a8a8;border-bottom:none"></div>
<div class="a t" style="left:861px;top:518px;width:60px;text-align:center;font-size:11px;line-height:11px;font-weight:400;color:#000;letter-spacing:-0.15px;letter-spacing:-0.3px">Daňová IČ</div>
<div class="a" style="left:922px;top:513px;width:124px;height:19px;background:linear-gradient(#f2f2f2,#e6e6e6);border:1px solid #a8a8a8;border-bottom:none"></div>
<div class="a t" style="left:922px;top:518px;width:124px;text-align:center;font-size:11px;line-height:11px;font-weight:400;color:#000;letter-spacing:-0.15px;letter-spacing:-0.3px">Elektronická komunikace</div>
<div class="a" style="left:508px;top:541px;width:695px;height:81px;border:1px solid #a3b8d3;border-radius:3px"></div>
<div class="a t" style="left:514px;top:536px;padding:0 2px;background:#f0f0f0;font-size:11px;line-height:13px;font-weight:700;letter-spacing:0.25px;color:#000">Stav</div>
<div class="a" style="left:520px;top:558px;width:13px;height:13px;background:#f4f4f4;border:1px solid #b9b9b9"></div>
<div class="a t" style="left:537px;top:559px;font-size:11px;line-height:11px;font-weight:400;color:#6d6d6d;letter-spacing:-0.15px;">Insolvence</div>
<div class="a" style="left:597px;top:556px;width:58px;height:18px;background:linear-gradient(#f6f6f6,#e2e2e2);border:1px solid #acacac"></div>
<div class="a" style="left:597px;top:556px;width:58px;height:18px;display:flex;align-items:center;justify-content:center;gap:4px"><svg width="15" height="15" viewBox="0 0 15 15" style="position:static"><defs><clipPath id="gc"><circle cx="7.5" cy="7.5" r="7"/></clipPath></defs><g clip-path="url(#gc)"><rect width="15" height="15" fill="#1f9a48"/><path d="M0 9L15 4V8.5L0 13.5Z" fill="#2a6ad8"/><path d="M6 8L8 7L9 9L11 8.5L11.5 11L10 15H6L7 11Z" fill="#fff"/><path d="M3 2L6 1.5L5 4Z" fill="#fff" opacity="0.7"/></g><circle cx="7.5" cy="7.5" r="7" fill="none" stroke="#dfe" stroke-width="0.5"/></svg><span class="t" style="font-size:11px;line-height:13px;color:#000;letter-spacing:-0.15px;position:relative;top:0px">ISIR</span></div>
<div class="a" style="left:657px;top:556px;width:58px;height:18px;background:linear-gradient(#f6f6f6,#e2e2e2);border:1px solid #acacac"></div>
<div class="a" style="left:657px;top:556px;width:58px;height:18px;display:flex;align-items:center;justify-content:center;gap:4px"><svg width="15" height="15" viewBox="0 0 15 15" style="position:static"><defs><clipPath id="gc"><circle cx="7.5" cy="7.5" r="7"/></clipPath></defs><g clip-path="url(#gc)"><rect width="15" height="15" fill="#1f9a48"/><path d="M0 9L15 4V8.5L0 13.5Z" fill="#2a6ad8"/><path d="M6 8L8 7L9 9L11 8.5L11.5 11L10 15H6L7 11Z" fill="#fff"/><path d="M3 2L6 1.5L5 4Z" fill="#fff" opacity="0.7"/></g><circle cx="7.5" cy="7.5" r="7" fill="none" stroke="#dfe" stroke-width="0.5"/></svg><span class="t" style="font-size:11px;line-height:13px;color:#000;letter-spacing:-0.15px;position:relative;top:0px">EVUP</span></div>
<div class="a" style="left:847px;top:556px;width:58px;height:18px;background:linear-gradient(#f6f6f6,#e2e2e2);border:1px solid #acacac"></div>
<div class="a" style="left:847px;top:556px;width:58px;height:18px;display:flex;align-items:center;justify-content:center;gap:4px"><svg width="15" height="15" viewBox="0 0 15 15" style="position:static"><defs><clipPath id="gc"><circle cx="7.5" cy="7.5" r="7"/></clipPath></defs><g clip-path="url(#gc)"><rect width="15" height="15" fill="#1f9a48"/><path d="M0 9L15 4V8.5L0 13.5Z" fill="#2a6ad8"/><path d="M6 8L8 7L9 9L11 8.5L11.5 11L10 15H6L7 11Z" fill="#fff"/><path d="M3 2L6 1.5L5 4Z" fill="#fff" opacity="0.7"/></g><circle cx="7.5" cy="7.5" r="7" fill="none" stroke="#dfe" stroke-width="0.5"/></svg><span class="t" style="font-size:11px;line-height:13px;color:#000;letter-spacing:-0.15px;position:relative;top:0px">OR</span></div>
<div class="a" style="left:907px;top:556px;width:58px;height:18px;background:linear-gradient(#f6f6f6,#e2e2e2);border:1px solid #acacac"></div>
<div class="a" style="left:907px;top:556px;width:58px;height:18px;display:flex;align-items:center;justify-content:center;gap:4px"><svg width="15" height="15" viewBox="0 0 15 15" style="position:static"><defs><clipPath id="gc"><circle cx="7.5" cy="7.5" r="7"/></clipPath></defs><g clip-path="url(#gc)"><rect width="15" height="15" fill="#1f9a48"/><path d="M0 9L15 4V8.5L0 13.5Z" fill="#2a6ad8"/><path d="M6 8L8 7L9 9L11 8.5L11.5 11L10 15H6L7 11Z" fill="#fff"/><path d="M3 2L6 1.5L5 4Z" fill="#fff" opacity="0.7"/></g><circle cx="7.5" cy="7.5" r="7" fill="none" stroke="#dfe" stroke-width="0.5"/></svg><span class="t" style="font-size:11px;line-height:13px;color:#000;letter-spacing:-0.15px;position:relative;top:0px">RŽP</span></div>
<div class="a" style="left:1037px;top:556px;width:58px;height:18px;background:linear-gradient(#f6f6f6,#e2e2e2);border:1px solid #acacac"></div>
<div class="a" style="left:1037px;top:556px;width:58px;height:18px;display:flex;align-items:center;justify-content:center;gap:4px"><svg width="15" height="15" viewBox="0 0 15 15" style="position:static"><defs><clipPath id="gc"><circle cx="7.5" cy="7.5" r="7"/></clipPath></defs><g clip-path="url(#gc)"><rect width="15" height="15" fill="#1f9a48"/><path d="M0 9L15 4V8.5L0 13.5Z" fill="#2a6ad8"/><path d="M6 8L8 7L9 9L11 8.5L11.5 11L10 15H6L7 11Z" fill="#fff"/><path d="M3 2L6 1.5L5 4Z" fill="#fff" opacity="0.7"/></g><circle cx="7.5" cy="7.5" r="7" fill="none" stroke="#dfe" stroke-width="0.5"/></svg><span class="t" style="font-size:11px;line-height:13px;color:#000;letter-spacing:-0.15px;position:relative;top:0px">ARES</span></div>
<div class="a" style="left:1097px;top:556px;width:88px;height:18px;background:linear-gradient(#f6f6f6,#e2e2e2);border:1px solid #acacac"></div>
<div class="a" style="left:1097px;top:556px;width:88px;height:18px;display:flex;align-items:center;justify-content:center;gap:4px"><svg width="15" height="15" viewBox="0 0 15 15" style="position:static"><defs><clipPath id="gc"><circle cx="7.5" cy="7.5" r="7"/></clipPath></defs><g clip-path="url(#gc)"><rect width="15" height="15" fill="#1f9a48"/><path d="M0 9L15 4V8.5L0 13.5Z" fill="#2a6ad8"/><path d="M6 8L8 7L9 9L11 8.5L11.5 11L10 15H6L7 11Z" fill="#fff"/><path d="M3 2L6 1.5L5 4Z" fill="#fff" opacity="0.7"/></g><circle cx="7.5" cy="7.5" r="7" fill="none" stroke="#dfe" stroke-width="0.5"/></svg><span class="t" style="font-size:11px;line-height:13px;color:#000;letter-spacing:-0.15px;position:relative;top:0px">CreditCheck</span></div>
<div class="a t" style="left:516px;top:580px;font-size:11px;line-height:11px;font-weight:400;color:#000;letter-spacing:-0.15px;">Nespolehlivý plátce DPH</div>
<div class="a t" style="left:645px;top:580px;font-size:11px;line-height:11px;font-weight:400;color:#8a1a9a;letter-spacing:-0.15px;">NE</div>
<div class="a" style="left:727px;top:576px;width:118px;height:18px;background:linear-gradient(#f6f6f6,#e2e2e2);border:1px solid #acacac"></div>
<div class="a" style="left:727px;top:576px;width:118px;height:18px;display:flex;align-items:center;justify-content:center;gap:4px"><svg width="15" height="15" viewBox="0 0 15 15" style="position:static"><defs><clipPath id="gc"><circle cx="7.5" cy="7.5" r="7"/></clipPath></defs><g clip-path="url(#gc)"><rect width="15" height="15" fill="#1f9a48"/><path d="M0 9L15 4V8.5L0 13.5Z" fill="#2a6ad8"/><path d="M6 8L8 7L9 9L11 8.5L11.5 11L10 15H6L7 11Z" fill="#fff"/><path d="M3 2L6 1.5L5 4Z" fill="#fff" opacity="0.7"/></g><circle cx="7.5" cy="7.5" r="7" fill="none" stroke="#dfe" stroke-width="0.5"/></svg><span class="t" style="font-size:11px;line-height:13px;color:#000;letter-spacing:-0.15px;position:relative;top:0px">Registr plátců DPH</span></div>
<div class="a" style="left:847px;top:576px;width:118px;height:18px;background:linear-gradient(#f6f6f6,#e2e2e2);border:1px solid #acacac"></div>
<div class="a" style="left:847px;top:576px;width:118px;height:18px;display:flex;align-items:center;justify-content:center;gap:4px"><svg width="15" height="15" viewBox="0 0 15 15" style="position:static"><defs><clipPath id="gc"><circle cx="7.5" cy="7.5" r="7"/></clipPath></defs><g clip-path="url(#gc)"><rect width="15" height="15" fill="#1f9a48"/><path d="M0 9L15 4V8.5L0 13.5Z" fill="#2a6ad8"/><path d="M6 8L8 7L9 9L11 8.5L11.5 11L10 15H6L7 11Z" fill="#fff"/><path d="M3 2L6 1.5L5 4Z" fill="#fff" opacity="0.7"/></g><circle cx="7.5" cy="7.5" r="7" fill="none" stroke="#dfe" stroke-width="0.5"/></svg><span class="t" style="font-size:11px;line-height:13px;color:#000;letter-spacing:-0.15px;position:relative;top:0px">Plátce DPH - VIES</span></div>
<div class="a t" style="left:516px;top:600px;font-size:11px;line-height:11px;font-weight:400;color:#000;letter-spacing:-0.15px;">Platnost firmy - od</div>
<div class="a" style="left:616px;top:595px;width:72px;height:19px;background:#e6e6e6;border:1px solid #a9a9a9"></div>
<div class="a" style="left:687px;top:595px;width:16px;height:19px;background:#a2a2a2;border:1px solid #7c7c7c"></div>
<svg class="a" style="left:690px;top:598px" width="9" height="12" viewBox="0 0 9 12"><rect x="0.5" y="0.5" width="8" height="11" fill="none" stroke="#888"/><path d="M1 3H8M1 5.5H8M1 8H8M3 3V11M6 3V11" stroke="#888" stroke-width="0.8"/></svg>
<div class="a t" style="left:619px;top:600px;font-size:11px;line-height:11px;font-weight:400;color:#000;letter-spacing:-0.15px;letter-spacing:0.1px">20.03.2015</div>
<div class="a t" style="left:716px;top:600px;font-size:11px;line-height:11px;font-weight:400;color:#000;letter-spacing:-0.15px;">- do</div>
<div class="a" style="left:746px;top:595px;width:72px;height:19px;background:#e6e6e6;border:1px solid #a9a9a9"></div>
<div class="a" style="left:817px;top:595px;width:16px;height:19px;background:#a2a2a2;border:1px solid #7c7c7c"></div>
<svg class="a" style="left:820px;top:598px" width="9" height="12" viewBox="0 0 9 12"><rect x="0.5" y="0.5" width="8" height="11" fill="none" stroke="#888"/><path d="M1 3H8M1 5.5H8M1 8H8M3 3V11M6 3V11" stroke="#888" stroke-width="0.8"/></svg>
<div class="a t" style="left:749px;top:600px;font-size:11px;line-height:11px;font-weight:400;color:#000;letter-spacing:-0.15px;letter-spacing:0.1px">31.12.2099</div>
<div class="a" style="left:508px;top:631px;width:695px;height:40px;border:1px solid #a3b8d3;border-radius:3px"></div>
<div class="a t" style="left:514px;top:626px;padding:0 2px;background:#f0f0f0;font-size:11px;line-height:13px;font-weight:700;letter-spacing:0.25px;color:#000">Obchodní název</div>
<div class="a" style="left:516px;top:645px;width:660px;height:19px;background:#e6e6e6;border:1px solid #a9a9a9"></div>
<div class="a t" style="left:518px;top:650px;font-size:11px;line-height:11px;font-weight:400;color:#000;letter-spacing:-0.15px;">POKUS 14 pokus</div>
<div class="a" style="left:508px;top:681px;width:345px;height:251px;border:1px solid #a3b8d3;border-radius:3px"></div>
<div class="a t" style="left:514px;top:676px;padding:0 2px;background:#f0f0f0;font-size:11px;line-height:13px;font-weight:700;letter-spacing:0.25px;color:#000">Hlavní adresa</div>
<div class="a t" style="left:516px;top:700px;font-size:11px;line-height:11px;font-weight:400;color:#000;letter-spacing:-0.15px;">Jméno/Název</div>
<div class="a t" style="left:516px;top:780px;font-size:11px;line-height:11px;font-weight:400;color:#000;letter-spacing:-0.15px;">Ulice</div>
<div class="a t" style="left:516px;top:800px;font-size:11px;line-height:11px;font-weight:400;color:#000;letter-spacing:-0.15px;">P.O.Box</div>
<div class="a t" style="left:516px;top:820px;font-size:11px;line-height:11px;font-weight:400;color:#000;letter-spacing:-0.15px;">PSČ, Místo</div>
<div class="a t" style="left:516px;top:840px;font-size:11px;line-height:11px;font-weight:400;color:#000;letter-spacing:-0.15px;">Země</div>
<div class="a t" style="left:516px;top:860px;font-size:11px;line-height:11px;font-weight:400;color:#000;letter-spacing:-0.15px;">NUTS</div>
<div class="a t" style="left:516px;top:880px;font-size:11px;line-height:11px;font-weight:400;color:#000;letter-spacing:-0.15px;">Řeč</div>
<div class="a t" style="left:516px;top:900px;font-size:11px;line-height:11px;font-weight:400;color:#000;letter-spacing:-0.15px;">Okres</div>
<div class="a" style="left:586px;top:695px;width:260px;height:19px;background:#e6e6e6;border:1px solid #a9a9a9"></div>
<div class="a t" style="left:589px;top:700px;font-size:11px;line-height:11px;font-weight:400;color:#000;letter-spacing:-0.15px;">POKUS 14</div>
<div class="a" style="left:586px;top:715px;width:260px;height:19px;background:#e6e6e6;border:1px solid #a9a9a9"></div>
<div class="a" style="left:586px;top:735px;width:260px;height:19px;background:#e6e6e6;border:1px solid #a9a9a9"></div>
<div class="a" style="left:586px;top:755px;width:260px;height:19px;background:#e6e6e6;border:1px solid #a9a9a9"></div>
<div class="a t" style="left:589px;top:760px;font-size:11px;line-height:11px;font-weight:400;color:#000;letter-spacing:-0.15px;">pokus</div>
<div class="a" style="left:586px;top:775px;width:220px;height:19px;background:#e6e6e6;border:1px solid #a9a9a9"></div>
<div class="a t" style="left:589px;top:780px;font-size:11px;line-height:11px;font-weight:400;color:#000;letter-spacing:-0.15px;">Novohradská 165</div>
<div class="a" style="left:807px;top:776px;width:38px;height:38px;background:#ececec;border:1px solid #a8a8a8"></div>
<div class="a" style="left:811px;top:780px;width:31px;height:30px;background:#e8e8e8;border:1.5px solid #6ab0f0"></div>
<svg class="a" style="left:800px;top:770px" width="52" height="50" viewBox="0 0 52 50"><path d="M11.5 22.5L16 19.5L21 17L23 16.5L24.5 17L29 19L31 22.5L33 21.5L37 23L41 25L38.5 28.5L35 31L30 30L24 29.5L22 32L20 32.5L13.5 27Z" fill="#fff" stroke="#0a3a8a" stroke-width="1.5" stroke-linejoin="round"/><circle cx="21.5" cy="24.5" r="0.9" fill="#e00"/><circle cx="28.5" cy="27.5" r="0.9" fill="#e00"/></svg>
<div class="a" style="left:586px;top:795px;width:120px;height:19px;background:#e6e6e6;border:1px solid #a9a9a9"></div>
<div class="a" style="left:586px;top:815px;width:65px;height:19px;background:#e6e6e6;border:1px solid #a9a9a9"></div>
<div class="a" style="left:650px;top:815px;width:16px;height:19px;background:#a2a2a2;border:1px solid #7c7c7c"></div>
<svg class="a" style="left:652px;top:819px" width="11" height="10" viewBox="0 0 11 10"><path d="M4 0.5H7V4H9L5.5 7L2 4H4Z" fill="#858585"/><path d="M2 8.7H9" stroke="#858585" stroke-width="1"/></svg>
<div class="a" style="left:676px;top:815px;width:170px;height:19px;background:#e6e6e6;border:1px solid #a9a9a9"></div>
<div class="a" style="left:586px;top:835px;width:46px;height:19px;background:#e6e6e6;border:1px solid #a9a9a9"></div>
<div class="a" style="left:631px;top:835px;width:15px;height:19px;background:#a2a2a2;border:1px solid #7c7c7c"></div>
<svg class="a" style="left:633px;top:839px" width="11" height="10" viewBox="0 0 11 10"><path d="M4 0.5H7V4H9L5.5 7L2 4H4Z" fill="#858585"/><path d="M2 8.7H9" stroke="#858585" stroke-width="1"/></svg>
<div class="a t" style="left:655px;top:840px;font-size:11px;line-height:11px;font-weight:400;color:#8a1a9a;letter-spacing:-0.15px;">Česká republika</div>
<div class="a t" style="left:589px;top:840px;font-size:11px;line-height:11px;font-weight:400;color:#000;letter-spacing:-0.15px;">CZ</div>
<div class="a" style="left:586px;top:855px;width:96px;height:19px;background:#e6e6e6;border:1px solid #a9a9a9"></div>
<div class="a" style="left:681px;top:855px;width:15px;height:19px;background:#a2a2a2;border:1px solid #7c7c7c"></div>
<svg class="a" style="left:683px;top:859px" width="11" height="10" viewBox="0 0 11 10"><path d="M4 0.5H7V4H9L5.5 7L2 4H4Z" fill="#858585"/><path d="M2 8.7H9" stroke="#858585" stroke-width="1"/></svg>
<div class="a" style="left:586px;top:875px;width:46px;height:19px;background:#e6e6e6;border:1px solid #a9a9a9"></div>
<div class="a" style="left:631px;top:875px;width:15px;height:19px;background:#a2a2a2;border:1px solid #7c7c7c"></div>
<svg class="a" style="left:633px;top:879px" width="11" height="10" viewBox="0 0 11 10"><path d="M4 0.5H7V4H9L5.5 7L2 4H4Z" fill="#858585"/><path d="M2 8.7H9" stroke="#858585" stroke-width="1"/></svg>
<div class="a t" style="left:589px;top:880px;font-size:11px;line-height:11px;font-weight:400;color:#000;letter-spacing:-0.15px;">CS</div>
<div class="a t" style="left:655px;top:880px;font-size:11px;line-height:11px;font-weight:400;color:#8a1a9a;letter-spacing:-0.15px;">Čeština</div>
<div class="a" style="left:586px;top:895px;width:46px;height:19px;background:#e6e6e6;border:1px solid #a9a9a9"></div>
<div class="a" style="left:631px;top:895px;width:15px;height:19px;background:#a2a2a2;border:1px solid #7c7c7c"></div>
<svg class="a" style="left:633px;top:899px" width="11" height="10" viewBox="0 0 11 10"><path d="M4 0.5H7V4H9L5.5 7L2 4H4Z" fill="#858585"/><path d="M2 8.7H9" stroke="#858585" stroke-width="1"/></svg>
<div class="a" style="left:858px;top:682px;width:345px;height:250px;border:1px solid #a3b8d3;border-radius:3px"></div>
<div class="a t" style="left:866px;top:700px;font-size:11px;line-height:11px;font-weight:400;color:#000;letter-spacing:-0.15px;">DIČ</div>
<div class="a" style="left:926px;top:695px;width:110px;height:19px;background:#e6e6e6;border:1px solid #a9a9a9"></div>
<div class="a t" style="left:929px;top:700px;font-size:11px;line-height:11px;font-weight:400;color:#000;letter-spacing:-0.15px;">CZ00529745</div>
<div class="a" style="left:1040px;top:698px;width:13px;height:13px;background:#f4f4f4;border:1px solid #b0b0b0"></div>
<svg class="a" style="left:1042px;top:700px" width="9" height="9" viewBox="0 0 9 9"><path d="M1 5L3.3 7.5L8 1" fill="none" stroke="#4a5a8e" stroke-width="1.5"/></svg>
<div class="a t" style="left:1056px;top:699px;font-size:11px;line-height:11px;font-weight:400;color:#333;letter-spacing:-0.15px;">Plátce DPH</div>
<div class="a" style="left:1120px;top:698px;width:13px;height:13px;background:#f4f4f4;border:1px solid #b0b0b0"></div>
<div class="a t" style="left:1137px;top:699px;font-size:11px;line-height:11px;font-weight:400;color:#333;letter-spacing:-0.15px;">Ohlaš.pov.</div>
<div class="a t" style="left:866px;top:720px;font-size:11px;line-height:11px;font-weight:400;color:#000;letter-spacing:-0.15px;">RČ</div>
<div class="a" style="left:926px;top:715px;width:30px;height:19px;background:#e6e6e6;border:1px solid #a9a9a9"></div>
<div class="a" style="left:966px;top:715px;width:100px;height:19px;background:#e6e6e6;border:1px solid #a9a9a9"></div>
<div class="a t" style="left:1066px;top:720px;font-size:11px;line-height:11px;font-weight:400;color:#000;letter-spacing:-0.15px;">/</div>
<div class="a" style="left:1076px;top:715px;width:60px;height:19px;background:#e6e6e6;border:1px solid #a9a9a9"></div>
<div class="a" style="left:1146px;top:715px;width:20px;height:19px;background:#e6e6e6;border:1px solid #a9a9a9"></div>
<div class="a t" style="left:866px;top:760px;font-size:11px;line-height:11px;font-weight:400;color:#000;letter-spacing:-0.15px;">Zástupce 1</div>
<div class="a" style="left:926px;top:755px;width:270px;height:19px;background:#e6e6e6;border:1px solid #a9a9a9"></div>
<div class="a t" style="left:866px;top:780px;font-size:11px;line-height:11px;font-weight:400;color:#000;letter-spacing:-0.15px;">Zástupce 2</div>
<div class="a" style="left:926px;top:775px;width:270px;height:19px;background:#e6e6e6;border:1px solid #a9a9a9"></div>
<div class="a t" style="left:866px;top:800px;font-size:11px;line-height:11px;font-weight:400;color:#000;letter-spacing:-0.15px;">Telefon</div>
<div class="a" style="left:926px;top:795px;width:270px;height:19px;background:#e6e6e6;border:1px solid #a9a9a9"></div>
<div class="a t" style="left:929px;top:800px;font-size:11px;line-height:11px;font-weight:400;color:#000;letter-spacing:-0.15px;">15.1.2011</div>
<div class="a t" style="left:866px;top:820px;font-size:11px;line-height:11px;font-weight:400;color:#000;letter-spacing:-0.15px;">Fax</div>
<div class="a" style="left:926px;top:815px;width:270px;height:19px;background:#e6e6e6;border:1px solid #a9a9a9"></div>
<div class="a t" style="left:866px;top:840px;font-size:11px;line-height:11px;font-weight:400;color:#000;letter-spacing:-0.15px;">Mobil</div>
<div class="a" style="left:926px;top:835px;width:270px;height:19px;background:#e6e6e6;border:1px solid #a9a9a9"></div>
<div class="a t" style="left:866px;top:860px;font-size:11px;line-height:11px;font-weight:400;color:#000;letter-spacing:-0.15px;">E-mail</div>
<div class="a" style="left:926px;top:855px;width:270px;height:19px;background:#e6e6e6;border:1px solid #a9a9a9"></div>
<div class="a t" style="left:866px;top:880px;font-size:11px;line-height:11px;font-weight:400;color:#000;letter-spacing:-0.15px;">Web</div>
<div class="a" style="left:926px;top:875px;width:270px;height:19px;background:#e6e6e6;border:1px solid #a9a9a9"></div>
<div class="a t" style="left:866px;top:900px;font-size:11px;line-height:11px;font-weight:400;color:#000;letter-spacing:-0.15px;">Holding</div>
<div class="a" style="left:926px;top:895px;width:101px;height:19px;background:#e6e6e6;border:1px solid #a9a9a9"></div>
<div class="a" style="left:1026px;top:895px;width:15px;height:19px;background:#a2a2a2;border:1px solid #7c7c7c"></div>
<svg class="a" style="left:1028px;top:899px" width="11" height="10" viewBox="0 0 11 10"><path d="M4 0.5H7V4H9L5.5 7L2 4H4Z" fill="#858585"/><path d="M2 8.7H9" stroke="#858585" stroke-width="1"/></svg>
<div class="a t" style="right:858px;top:900px;text-align:right;font-size:11px;line-height:11px;font-weight:400;color:#000;letter-spacing:-0.15px;">0</div>
<div class="a" style="left:216px;top:247px;width:1px;height:299px;background:repeating-linear-gradient(#a0a0a0 0 1px,transparent 1px 2px)"></div>
<div class="a" style="left:235px;top:249px;width:1px;height:217px;background:repeating-linear-gradient(#a0a0a0 0 1px,transparent 1px 2px)"></div>
<div class="a" style="left:221px;top:242px;width:7px;height:1px;background:repeating-linear-gradient(90deg,#a0a0a0 0 1px,transparent 1px 2px)"></div>
<div class="a" style="left:212px;top:238px;width:9px;height:9px;background:linear-gradient(#fff,#e4e4e4);border:1px solid #8a8a8a;border-radius:1px"></div>
<div class="a" style="left:214px;top:242px;width:5px;height:1px;background:#3a4aa8"></div>
<svg class="a" style="left:227px;top:236px" width="17" height="15" viewBox="0 0 17 15">
<defs><linearGradient id="fg227236" x1="0" x2="1" y1="0" y2="0"><stop offset="0" stop-color="#f5c518"/><stop offset="1" stop-color="#8a5a08"/></linearGradient></defs>
<path d="M1 4H5L6 5.5H13V14H1Z" fill="#ffd820"/><path d="M3.5 8.5H16L13 14H1Z" fill="url(#fg227236)"/>
<path d="M9.5 1.8C11.5 1.2 13 1.5 14.5 3.5" fill="none" stroke="#111" stroke-width="1.3"/><circle cx="14.5" cy="4" r="1" fill="#111"/></svg>
<div class="a t" style="left:246px;top:237px;font-size:11px;line-height:11px;font-weight:400;color:#000;letter-spacing:-0.15px;">Adresář</div>
<div class="a" style="left:236px;top:258px;width:10px;height:1px;background:repeating-linear-gradient(90deg,#a0a0a0 0 1px,transparent 1px 2px)"></div>
<svg class="a" style="left:246px;top:250px" width="17" height="16" viewBox="0 0 17 16"><rect x="1" y="1" width="11" height="8" fill="#f4f8fc" stroke="#8ab0d0" stroke-width="0.9"/><path d="M1 1L6.5 5.5L12 1" fill="none" stroke="#8ab0d0" stroke-width="0.9"/><path d="M5 7L14 5L15.5 13L6.5 15Z" fill="#fff" stroke="#777" stroke-width="0.8"/><rect x="11.5" y="6" width="2.5" height="2.5" fill="#f0b020"/><path d="M8 11L12 10M8 12.5L11 12" stroke="#9a9ac8" stroke-width="0.7"/></svg>
<div class="a t" style="left:265px;top:253px;font-size:11px;line-height:11px;font-weight:400;color:#000;letter-spacing:-0.15px;">Adresář</div>
<div class="a" style="left:236px;top:274px;width:10px;height:1px;background:repeating-linear-gradient(90deg,#a0a0a0 0 1px,transparent 1px 2px)"></div>
<div class="a t" style="left:246px;top:269px;font-size:11px;line-height:11px;font-weight:400;color:#000;letter-spacing:-0.15px;">Adresář 2016</div>
<div class="a" style="left:236px;top:290px;width:10px;height:1px;background:repeating-linear-gradient(90deg,#a0a0a0 0 1px,transparent 1px 2px)"></div>
<svg class="a" style="left:246px;top:282px" width="17" height="16" viewBox="0 0 17 16"><rect x="2" y="1" width="13" height="10" fill="#2a8ad8" stroke="#1a3a6a" stroke-width="0.9"/><path d="M5.5 5.5L8 8L12 3" fill="none" stroke="#f5a020" stroke-width="1.6"/><path d="M7.5 11H9.5V13H7.5Z" fill="#222"/><rect x="4" y="13" width="9" height="2" fill="#222"/></svg>
<div class="a t" style="left:265px;top:285px;font-size:11px;line-height:11px;font-weight:400;color:#000;letter-spacing:-0.15px;">Další adresy</div>
<div class="a" style="left:236px;top:306px;width:10px;height:1px;background:repeating-linear-gradient(90deg,#a0a0a0 0 1px,transparent 1px 2px)"></div>
<svg class="a" style="left:246px;top:298px" width="17" height="16" viewBox="0 0 17 16"><rect x="1" y="1" width="11" height="8" fill="#f4f8fc" stroke="#8ab0d0" stroke-width="0.9"/><path d="M1 1L6.5 5.5L12 1" fill="none" stroke="#8ab0d0" stroke-width="0.9"/><circle cx="9.5" cy="10" r="5.5" fill="#2a6ad0" stroke="#1a3a8a" stroke-width="0.8"/><path d="M4 10H15M9.5 4.5V15.5M5.5 7H13.5M5.5 13H13.5" stroke="#8ac0f0" stroke-width="0.7"/><circle cx="7.5" cy="8" r="1" fill="#f5d020"/><circle cx="11.5" cy="12" r="1" fill="#f5d020"/></svg>
<div class="a t" style="left:265px;top:301px;font-size:11px;line-height:11px;font-weight:400;color:#000;letter-spacing:-0.15px;">Země</div>
<div class="a" style="left:236px;top:322px;width:10px;height:1px;background:repeating-linear-gradient(90deg,#a0a0a0 0 1px,transparent 1px 2px)"></div>
<svg class="a" style="left:246px;top:314px" width="17" height="16" viewBox="0 0 17 16"><path d="M1 6L8.5 1L16 6Z" fill="#2a8ad8" stroke="#1a5aa8" stroke-width="0.8"/><path d="M5 4.5H12" stroke="#f0a030" stroke-width="0.8"/><rect x="2" y="6" width="13" height="7" fill="#fff" stroke="#2a8ad8" stroke-width="0.8"/><path d="M4.5 7V12M7.5 7V12M10.5 7V12M13 7V12" stroke="#2a8ad8" stroke-width="1.2"/><rect x="1" y="13" width="15" height="2.5" fill="#2a8ad8"/></svg>
<div class="a t" style="left:265px;top:317px;font-size:11px;line-height:11px;font-weight:400;color:#000;letter-spacing:-0.15px;">Bankovní ústavy</div>
<div class="a" style="left:236px;top:338px;width:10px;height:1px;background:repeating-linear-gradient(90deg,#a0a0a0 0 1px,transparent 1px 2px)"></div>
<svg class="a" style="left:246px;top:330px" width="17" height="16" viewBox="0 0 17 16"><rect x="1" y="1" width="11" height="8" fill="#f4f8fc" stroke="#8ab0d0" stroke-width="0.9"/><path d="M1 1L6.5 5.5L12 1" fill="none" stroke="#8ab0d0" stroke-width="0.9"/><path d="M1 11L6 8L10 10L15 9L16 13L10 15L4 14Z" fill="#2a6ad0"/><path d="M4 10L7 9.5L6.5 11.5ZM10 11L13 10.5L12 13Z" fill="#f5c020"/></svg>
<div class="a t" style="left:265px;top:333px;font-size:11px;line-height:11px;font-weight:400;color:#000;letter-spacing:-0.15px;">Okresy</div>
<div class="a" style="left:236px;top:354px;width:10px;height:1px;background:repeating-linear-gradient(90deg,#a0a0a0 0 1px,transparent 1px 2px)"></div>
<div class="a" style="left:265px;top:346px;width:104px;height:16px;background:#e2e2e2"></div>
<svg class="a" style="left:246px;top:346px" width="17" height="16" viewBox="0 0 17 16"><path d="M5 7L11 1.5L16 7V15H6Z" fill="#8ac0ef" stroke="#3a7ac8" stroke-width="0.8"/><rect x="9" y="10" width="3" height="5" fill="#fff"/><path d="M5 14C1 10.5 0.5 8.5 1 7C1.5 5.5 4 5.5 5 7.5C6 5.5 8.5 5.5 9 7C9.5 8.5 9 10.5 5 14Z" fill="#d81818" stroke="#901010" stroke-width="0.6"/></svg>
<div class="a t" style="left:265px;top:349px;font-size:11px;line-height:11px;font-weight:400;color:#000;letter-spacing:-0.15px;">Zdravotní pojišťovny</div>
<div class="a" style="left:236px;top:370px;width:10px;height:1px;background:repeating-linear-gradient(90deg,#a0a0a0 0 1px,transparent 1px 2px)"></div>
<svg class="a" style="left:246px;top:362px" width="17" height="16" viewBox="0 0 17 16"><rect x="1" y="1" width="11" height="8" fill="#f4f8fc" stroke="#8ab0d0" stroke-width="0.9"/><path d="M1 1L6.5 5.5L12 1" fill="none" stroke="#8ab0d0" stroke-width="0.9"/><path d="M2 10C5 15 12 15 15 11L13 8C11 11 7 12 4 9Z" fill="#f0b818" stroke="#b08010" stroke-width="0.7"/><circle cx="12" cy="11.5" r="2.3" fill="#fff" stroke="#b08010" stroke-width="0.8"/></svg>
<div class="a t" style="left:265px;top:365px;font-size:11px;line-height:11px;font-weight:400;color:#000;letter-spacing:-0.15px;">PSČ</div>
<div class="a" style="left:236px;top:386px;width:10px;height:1px;background:repeating-linear-gradient(90deg,#a0a0a0 0 1px,transparent 1px 2px)"></div>
<svg class="a" style="left:246px;top:378px" width="17" height="16" viewBox="0 0 17 16"><circle cx="4" cy="3.5" r="2" fill="#c83030"/><path d="M1.5 15L2 7H6L6.5 15Z" fill="#c83030"/><circle cx="8" cy="3" r="2" fill="#2a6ad8"/><path d="M5.5 14L6 6H10L10.5 14Z" fill="#2a6ad8"/><circle cx="12" cy="3.5" r="2" fill="#e0c020"/><path d="M9.5 15L10 7H14L14.5 15Z" fill="#e0c020"/><circle cx="14" cy="5" r="1.6" fill="#3a9a40"/><path d="M12 8H16V14H13Z" fill="#3a9a40"/></svg>
<div class="a t" style="left:265px;top:381px;font-size:11px;line-height:11px;font-weight:400;color:#000;letter-spacing:-0.15px;">Řeči</div>
<div class="a" style="left:236px;top:402px;width:10px;height:1px;background:repeating-linear-gradient(90deg,#a0a0a0 0 1px,transparent 1px 2px)"></div>
<svg class="a" style="left:246px;top:394px" width="17" height="16" viewBox="0 0 17 16"><path d="M0.5 7.5L6 1.5L8.5 4V7.5Z" fill="#d01818"/><path d="M8 1.5L16 7.5H8Z" fill="#40c030"/><rect x="2" y="7.5" width="6" height="7" fill="#3aa8e0"/><rect x="8" y="7.5" width="6.5" height="7" fill="#f5b818"/><circle cx="8" cy="11" r="1.5" fill="#f5b818"/></svg>
<div class="a t" style="left:265px;top:397px;font-size:11px;line-height:11px;font-weight:400;color:#000;letter-spacing:-0.15px;">NUTS</div>
<div class="a" style="left:236px;top:418px;width:10px;height:1px;background:repeating-linear-gradient(90deg,#a0a0a0 0 1px,transparent 1px 2px)"></div>
<svg class="a" style="left:246px;top:410px" width="17" height="16" viewBox="0 0 17 16"><path d="M0.5 7.5L6 1.5L8.5 4V7.5Z" fill="#d01818"/><path d="M8 1.5L16 7.5H8Z" fill="#fff" stroke="#888" stroke-width="0.6"/><rect x="2" y="7.5" width="6" height="7" fill="#fff" stroke="#aaa" stroke-width="0.6"/><rect x="8" y="9" width="6.5" height="5.5" fill="#f5b818"/></svg>
<div class="a t" style="left:265px;top:413px;font-size:11px;line-height:11px;font-weight:400;color:#000;letter-spacing:-0.15px;">Struktura NUTS</div>
<div class="a" style="left:236px;top:434px;width:10px;height:1px;background:repeating-linear-gradient(90deg,#a0a0a0 0 1px,transparent 1px 2px)"></div>
<svg class="a" style="left:246px;top:426px" width="17" height="16" viewBox="0 0 17 16"><rect x="1" y="1" width="11" height="8" fill="#f4f8fc" stroke="#8ab0d0" stroke-width="0.9"/><path d="M1 1L6.5 5.5L12 1" fill="none" stroke="#8ab0d0" stroke-width="0.9"/><circle cx="10.5" cy="10.5" r="5" fill="none" stroke="#f0902a" stroke-width="1.6"/><circle cx="10.5" cy="10.5" r="2" fill="none" stroke="#f0902a" stroke-width="1.3"/></svg>
<div class="a t" style="left:265px;top:429px;font-size:11px;line-height:11px;font-weight:400;color:#000;letter-spacing:-0.15px;">Adresy pro elektronickou komunikaci</div>
<div class="a" style="left:236px;top:450px;width:10px;height:1px;background:repeating-linear-gradient(90deg,#a0a0a0 0 1px,transparent 1px 2px)"></div>
<svg class="a" style="left:246px;top:442px" width="17" height="16" viewBox="0 0 17 16"><path d="M1 1H8V14H1Z" fill="#48b8e8"/><path d="M8 2L14.5 1.5V13.5L8 15Z" fill="#2a98c8"/><path d="M4 3.5V11" stroke="#111" stroke-width="1.3"/><path d="M10 5V11M10 6.5C10.5 5.5 11.5 5 12.5 5" fill="none" stroke="#111" stroke-width="1.2"/></svg>
<div class="a t" style="left:265px;top:445px;font-size:11px;line-height:11px;font-weight:400;color:#000;letter-spacing:-0.15px;">Insolvenční rejstřík</div>
<div class="a" style="left:236px;top:466px;width:10px;height:1px;background:repeating-linear-gradient(90deg,#a0a0a0 0 1px,transparent 1px 2px)"></div>
<svg class="a" style="left:246px;top:458px" width="17" height="16" viewBox="0 0 17 16"><path d="M0 9L16 13V16H0Z" fill="#7ab8f0"/><circle cx="12" cy="3.5" r="2.3" fill="#f5902a"/><path d="M3 5L8 4L11 6L13 9L10 9L8 12L4 14L6 10L3 9Z" fill="#f5902a"/></svg>
<div class="a t" style="left:265px;top:461px;font-size:11px;line-height:11px;font-weight:400;color:#000;letter-spacing:-0.15px;">Evidence úpadců</div>
<div class="a" style="left:221px;top:482px;width:7px;height:1px;background:repeating-linear-gradient(90deg,#a0a0a0 0 1px,transparent 1px 2px)"></div>
<div class="a" style="left:212px;top:478px;width:9px;height:9px;background:linear-gradient(#fff,#e4e4e4);border:1px solid #8a8a8a;border-radius:1px"></div>
<div class="a" style="left:214px;top:482px;width:5px;height:1px;background:#3a4aa8"></div>
<div class="a" style="left:216px;top:480px;width:1px;height:5px;background:#3a4aa8"></div>
<svg class="a" style="left:227px;top:476px" width="17" height="15" viewBox="0 0 17 15">
<defs><linearGradient id="fg227476" x1="0" x2="1" y1="0" y2="0"><stop offset="0" stop-color="#f5c518"/><stop offset="1" stop-color="#8a5a08"/></linearGradient></defs>
<path d="M1 4H5L6 5.5H13V14H1Z" fill="#ffd820"/><path d="M3.5 8.5H16L13 14H1Z" fill="url(#fg227476)"/>
<path d="M9.5 1.8C11.5 1.2 13 1.5 14.5 3.5" fill="none" stroke="#111" stroke-width="1.3"/><circle cx="14.5" cy="4" r="1" fill="#111"/></svg>
<div class="a t" style="left:246px;top:477px;font-size:11px;line-height:11px;font-weight:400;color:#000;letter-spacing:-0.15px;">Doklady</div>
<div class="a" style="left:221px;top:498px;width:7px;height:1px;background:repeating-linear-gradient(90deg,#a0a0a0 0 1px,transparent 1px 2px)"></div>
<div class="a" style="left:212px;top:494px;width:9px;height:9px;background:linear-gradient(#fff,#e4e4e4);border:1px solid #8a8a8a;border-radius:1px"></div>
<div class="a" style="left:214px;top:498px;width:5px;height:1px;background:#3a4aa8"></div>
<div class="a" style="left:216px;top:496px;width:1px;height:5px;background:#3a4aa8"></div>
<svg class="a" style="left:227px;top:492px" width="17" height="15" viewBox="0 0 17 15">
<defs><linearGradient id="fg227492" x1="0" x2="1" y1="0" y2="0"><stop offset="0" stop-color="#f5c518"/><stop offset="1" stop-color="#8a5a08"/></linearGradient></defs>
<path d="M1 4H5L6 5.5H13V14H1Z" fill="#ffd820"/><path d="M3.5 8.5H16L13 14H1Z" fill="url(#fg227492)"/>
<path d="M9.5 1.8C11.5 1.2 13 1.5 14.5 3.5" fill="none" stroke="#111" stroke-width="1.3"/><circle cx="14.5" cy="4" r="1" fill="#111"/></svg>
<div class="a t" style="left:246px;top:493px;font-size:11px;line-height:11px;font-weight:400;color:#000;letter-spacing:-0.15px;">Dimenze</div>
<div class="a" style="left:221px;top:514px;width:7px;height:1px;background:repeating-linear-gradient(90deg,#a0a0a0 0 1px,transparent 1px 2px)"></div>
<div class="a" style="left:212px;top:510px;width:9px;height:9px;background:linear-gradient(#fff,#e4e4e4);border:1px solid #8a8a8a;border-radius:1px"></div>
<div class="a" style="left:214px;top:514px;width:5px;height:1px;background:#3a4aa8"></div>
<div class="a" style="left:216px;top:512px;width:1px;height:5px;background:#3a4aa8"></div>
<svg class="a" style="left:227px;top:508px" width="17" height="15" viewBox="0 0 17 15">
<defs><linearGradient id="fg227508" x1="0" x2="1" y1="0" y2="0"><stop offset="0" stop-color="#f5c518"/><stop offset="1" stop-color="#8a5a08"/></linearGradient></defs>
<path d="M1 4H5L6 5.5H13V14H1Z" fill="#ffd820"/><path d="M3.5 8.5H16L13 14H1Z" fill="url(#fg227508)"/>
<path d="M9.5 1.8C11.5 1.2 13 1.5 14.5 3.5" fill="none" stroke="#111" stroke-width="1.3"/><circle cx="14.5" cy="4" r="1" fill="#111"/></svg>
<div class="a t" style="left:246px;top:509px;font-size:11px;line-height:11px;font-weight:400;color:#000;letter-spacing:-0.15px;">Úkoly</div>
<div class="a" style="left:221px;top:530px;width:7px;height:1px;background:repeating-linear-gradient(90deg,#a0a0a0 0 1px,transparent 1px 2px)"></div>
<div class="a" style="left:212px;top:526px;width:9px;height:9px;background:linear-gradient(#fff,#e4e4e4);border:1px solid #8a8a8a;border-radius:1px"></div>
<div class="a" style="left:214px;top:530px;width:5px;height:1px;background:#3a4aa8"></div>
<div class="a" style="left:216px;top:528px;width:1px;height:5px;background:#3a4aa8"></div>
<svg class="a" style="left:227px;top:524px" width="17" height="15" viewBox="0 0 17 15">
<defs><linearGradient id="fg227524" x1="0" x2="1" y1="0" y2="0"><stop offset="0" stop-color="#f5c518"/><stop offset="1" stop-color="#8a5a08"/></linearGradient></defs>
<path d="M1 4H5L6 5.5H13V14H1Z" fill="#ffd820"/><path d="M3.5 8.5H16L13 14H1Z" fill="url(#fg227524)"/>
<path d="M9.5 1.8C11.5 1.2 13 1.5 14.5 3.5" fill="none" stroke="#111" stroke-width="1.3"/><circle cx="14.5" cy="4" r="1" fill="#111"/></svg>
<div class="a t" style="left:246px;top:525px;font-size:11px;line-height:11px;font-weight:400;color:#000;letter-spacing:-0.15px;">Parametry</div>
<div class="a" style="left:221px;top:546px;width:7px;height:1px;background:repeating-linear-gradient(90deg,#a0a0a0 0 1px,transparent 1px 2px)"></div>
<div class="a" style="left:212px;top:542px;width:9px;height:9px;background:linear-gradient(#fff,#e4e4e4);border:1px solid #8a8a8a;border-radius:1px"></div>
<div class="a" style="left:214px;top:546px;width:5px;height:1px;background:#3a4aa8"></div>
<div class="a" style="left:216px;top:544px;width:1px;height:5px;background:#3a4aa8"></div>
<svg class="a" style="left:227px;top:540px" width="17" height="15" viewBox="0 0 17 15">
<defs><linearGradient id="fg227540" x1="0" x2="1" y1="0" y2="0"><stop offset="0" stop-color="#f5c518"/><stop offset="1" stop-color="#8a5a08"/></linearGradient></defs>
<path d="M1 4H5L6 5.5H13V14H1Z" fill="#ffd820"/><path d="M3.5 8.5H16L13 14H1Z" fill="url(#fg227540)"/>
<path d="M9.5 1.8C11.5 1.2 13 1.5 14.5 3.5" fill="none" stroke="#111" stroke-width="1.3"/><circle cx="14.5" cy="4" r="1" fill="#111"/></svg>
<div class="a t" style="left:246px;top:541px;font-size:11px;line-height:11px;font-weight:400;color:#000;letter-spacing:-0.15px;">Mimořádné akce</div>
<div class="a" style="left:488px;top:1054px;width:1392px;height:19px;background:#f0f0f0"></div>
<div class="a" style="left:608px;top:1055px;width:1px;height:17px;background:#a0a0a0"></div>
<div class="a" style="left:848px;top:1055px;width:1px;height:17px;background:#a0a0a0"></div>
<div class="a" style="left:888px;top:1055px;width:1px;height:17px;background:#a0a0a0"></div>
<div class="a" style="left:968px;top:1055px;width:1px;height:17px;background:#a0a0a0"></div>
<div class="a t" style="left:494px;top:1060px;font-size:11px;line-height:11px;font-weight:400;color:#000;letter-spacing:-0.15px;">O6aWrapper</div>
<div class="a t" style="left:613px;top:1060px;font-size:11px;line-height:11px;font-weight:400;color:#000;letter-spacing:-0.15px;">O6a(V)</div>
<div class="a t" style="left:894px;top:1060px;font-size:11px;line-height:11px;font-weight:400;color:#000;letter-spacing:-0.15px;">20.09.2016</div>
<div class="a" style="left:488px;top:1054px;width:1px;height:19px;background:#a0a0a0"></div>
<svg class="a" style="left:1864px;top:1058px" width="12" height="12" viewBox="0 0 12 12"><path d="M11 1L1 11M11 5L5 11M11 9L9 11" stroke="#9a9a9a" stroke-width="1"/></svg>
<div class="a" style="left:202px;top:1073px;width:1678px;height:28px;background:#f0f0f0"></div>
<div class="a" style="left:207px;top:1077px;width:63px;height:20px;background:#b6d4f1;border-top:1px solid #7ab0ea"></div>
<svg class="a" style="left:208px;top:1080px" width="17" height="16" viewBox="0 0 17 16"><rect x="1" y="1" width="11" height="8" fill="#f4f8fc" stroke="#8ab0d0" stroke-width="0.9"/><path d="M1 1L6.5 5.5L12 1" fill="none" stroke="#8ab0d0" stroke-width="0.9"/><path d="M5 7L14 5L15.5 13L6.5 15Z" fill="#fff" stroke="#777" stroke-width="0.8"/><rect x="11.5" y="6" width="2.5" height="2.5" fill="#f0b020"/><path d="M8 11L12 10M8 12.5L11 12" stroke="#9a9ac8" stroke-width="0.7"/></svg>
<div class="a t" style="left:227px;top:1083px;font-size:11px;line-height:11px;font-weight:400;color:#000;letter-spacing:-0.15px;">Adresář</div>
<svg class="a" style="left:1864px;top:1080px" width="11" height="14" viewBox="0 0 11 14"><path d="M1.5 2L5.5 5.5L9.5 2M1.5 7L5.5 10.5L9.5 7" fill="none" stroke="#707070" stroke-width="1.6"/></svg>
<div class="a" style="left:202px;top:1101px;width:1678px;height:22px;background:#f0f0f0;border-bottom:1px solid #a0a0a0;border-left:1px solid #a0a0a0"></div>
<div class="a" style="left:323px;top:1102px;width:1px;height:20px;background:#a0a0a0"></div>
<div class="a" style="left:443px;top:1102px;width:1px;height:20px;background:#a0a0a0"></div>
<div class="a" style="left:1183px;top:1102px;width:1px;height:20px;background:#a0a0a0"></div>
<div class="a t" style="left:209px;top:1107px;font-size:11px;line-height:11px;font-weight:400;color:#000;letter-spacing:-0.15px;">localhost:2099</div>
<div class="a t" style="left:329px;top:1107px;font-size:11px;line-height:11px;font-weight:400;color:#000;letter-spacing:-0.15px;">2</div>
<div class="a t" style="left:448px;top:1107px;font-size:11px;line-height:11px;font-weight:400;color:#000;letter-spacing:-0.15px;">C:\Users\dejmkova.ORTCRM\Documents\Orsoft-vyvoj\orsoft-srv</div>
<svg class="a" style="left:1866px;top:1106px" width="12" height="12" viewBox="0 0 12 12"><path d="M11 1L1 11M11 5L5 11M11 9L9 11" stroke="#9a9a9a" stroke-width="1"/></svg>
<div class="a" style="left:204px;top:154px;width:1676px;height:34px;border:4px solid #1a9c4a;border-right-width:4px"></div>
<div class="a" style="left:198px;top:208px;width:284px;height:532px;border:4px solid #fd9f41"></div>
<div class="a" style="left:488px;top:187px;width:1388px;height:867px;border:4px solid #1a9c4a;border-top:none"></div>
<div class="a" style="left:203px;top:1073px;width:1677px;height:29px;border:4px solid #fd9f41;border-right:none"></div>
<div class="a" style="left:1876px;top:1073px;width:4px;height:29px;background:#fd9f41"></div>
<div class="a" style="left:1022px;top:214px;width:27px;height:21px;background:#ffffb0"></div>
<svg class="a" style="left:498px;top:216px" width="16" height="16" viewBox="0 0 16 16"><rect x="1" y="1" width="14" height="1" fill="#222"/><rect x="1" y="3" width="14" height="1" fill="#222"/><rect x="1" y="5" width="14" height="1" fill="#222"/><rect x="1" y="7" width="14" height="1" fill="#222"/><rect x="1" y="9" width="14" height="1" fill="#222"/><rect x="1" y="11" width="14" height="1" fill="#222"/><rect x="1" y="13" width="14" height="1" fill="#222"/><rect x="1" y="15" width="14" height="1" fill="#222"/></svg>
<svg class="a" style="left:525px;top:216px" width="16" height="16" viewBox="0 0 16 16"><path d="M2 4C5 2 11 2 14 4" fill="none" stroke="#e2b020" stroke-width="1"/><path d="M0.5 9C4 4 12 4 15.5 9C12 14 4 14 0.5 9Z" fill="#fff" stroke="#e2b020" stroke-width="1.6"/><circle cx="8" cy="9" r="3.2" fill="#1a5a9a"/><circle cx="8" cy="9" r="1.3" fill="#000"/></svg>
<svg class="a" style="left:552px;top:216px" width="16" height="16" viewBox="0 0 16 16"><rect x="1" y="0" width="14" height="1.4" fill="#222"/><rect x="1" y="3" width="14" height="1.4" fill="#222"/><path d="M1 11C4 6 12 6 15 11C12 15 4 15 1 11Z" fill="#fff" stroke="#e2b020" stroke-width="1.5"/><circle cx="8" cy="11" r="3" fill="#1a5a9a"/><circle cx="8" cy="11" r="1.2" fill="#000"/></svg>
<svg class="a" style="left:578px;top:216px" width="16" height="16" viewBox="0 0 16 16"><path d="M2 1H10L13 4V15H2Z" fill="#fff" stroke="#3a8ad8" stroke-width="1.3"/><path d="M7 8L11 13" stroke="#e06020" stroke-width="2"/></svg>
<svg class="a" style="left:605px;top:216px" width="16" height="16" viewBox="0 0 16 16"><path d="M2 1H10L13 4V15H2Z" fill="#fff" stroke="#3a8ad8" stroke-width="1.3"/><path d="M3 2H10V9L6 12H3Z" fill="#f5c518"/><path d="M7 8L11 13" stroke="#e06020" stroke-width="2"/></svg>
<svg class="a" style="left:633px;top:216px" width="16" height="16" viewBox="0 0 16 16"><rect x="5" y="0.5" width="6" height="2" fill="#c89a10"/><rect x="2" y="2" width="12" height="2.5" rx="1" fill="#5a8ac0"/><path d="M3 4.5H13L12 15H4Z" fill="#e6b830" stroke="#6a90c0" stroke-width="0.8"/><path d="M6 6V13M8 6V13M10 6V13" stroke="#b88a10" stroke-width="0.8"/></svg>
<svg class="a" style="left:659px;top:216px" width="16" height="16" viewBox="0 0 16 16"><path d="M1 1H8V12H1Z" fill="#fff" stroke="#3a8ad8"/><path d="M4 3H11L14 6V15H4Z" fill="#fff" stroke="#3a8ad8" stroke-width="1.2"/><path d="M8 9L12 13" stroke="#e06020" stroke-width="1.8"/></svg>
<svg class="a" style="left:686px;top:216px" width="16" height="16" viewBox="0 0 16 16"><rect x="0" y="1.0" width="16" height="1.2" fill="#222"/><rect x="0" y="3.5" width="16" height="1.2" fill="#222"/><rect x="0" y="6.0" width="16" height="1.2" fill="#222"/><rect x="0" y="8.5" width="16" height="1.2" fill="#222"/><rect x="0" y="11.0" width="16" height="1.2" fill="#222"/><rect x="0" y="13.5" width="16" height="1.2" fill="#222"/><circle cx="11" cy="3" r="2.2" fill="#4a9ad8"/><path d="M8 12C8 7 14 7 14 12Z" fill="#4a9ad8"/><circle cx="5" cy="7" r="2.2" fill="#f08a30"/><path d="M1.5 15C1.5 10 8.5 10 8.5 15Z" fill="#f08a30"/></svg>
<svg class="a" style="left:714px;top:216px" width="16" height="16" viewBox="0 0 16 16"><path d="M1 2H15L9.5 8V14L6.5 15V8Z" fill="#2a7ad0"/><ellipse cx="8" cy="2.5" rx="7" ry="1.5" fill="#7ab8f0" stroke="#e0a030" stroke-width="0.7"/></svg>
<svg class="a" style="left:740px;top:216px" width="16" height="16" viewBox="0 0 16 16"><path d="M2 1H10L13 4V15H2Z" fill="#fff" stroke="#3aa040" stroke-width="1.3"/><rect x="0.5" y="3" width="4" height="2" fill="#d02020"/><path d="M5 8L10 14M10 8L5 14" stroke="#2a8a30" stroke-width="1.6"/></svg>
<svg class="a" style="left:769px;top:216px" width="16" height="16" viewBox="0 0 16 16"><rect x="1.5" y="1" width="12" height="14" rx="1" fill="#eef4fc" stroke="#5a9ae0" stroke-width="1.2"/><path d="M3 1.5H12" stroke="#f0c040" stroke-width="1.5"/><path d="M5 12L12 5" stroke="#f0a020" stroke-width="2.2"/><path d="M4 13L5 12" stroke="#333" stroke-width="1.5"/></svg>
<svg class="a" style="left:795px;top:216px" width="16" height="16" viewBox="0 0 16 16"><rect x="0.5" y="3" width="14" height="12.5" fill="#1a7ac8"/><circle cx="7.5" cy="10" r="5" fill="#fff" stroke="#1a4a8a"/><path d="M7.5 10V7M7.5 10H10" stroke="#000" stroke-width="1"/><path d="M5 5C6 1 10 0 11 3L13 2L12 7L8 5.5L10 4.5C9 3 7 3.5 6 5Z" fill="#f5c518"/></svg>
<svg class="a" style="left:822px;top:216px" width="16" height="16" viewBox="0 0 16 16"><rect x="7" y="0.5" width="8" height="14" fill="#f4f4f4" stroke="#333"/><circle cx="7" cy="9.5" r="6" fill="#1a3a9a"/><circle cx="7" cy="9.5" r="3.5" fill="#6a8ae0"/><circle cx="7" cy="9.5" r="1.3" fill="#fff"/></svg>
<svg class="a" style="left:849px;top:216px" width="16" height="16" viewBox="0 0 16 16"><rect x="1" y="1" width="6" height="3" fill="#fff" stroke="#5a9ad8" stroke-width="0.9"/><rect x="5" y="5" width="7" height="3" fill="#fff" stroke="#5a9ad8" stroke-width="0.9"/><rect x="9" y="8" width="5" height="3" fill="#fff" stroke="#5a9ad8" stroke-width="0.9"/><rect x="4" y="10" width="6" height="3" fill="#fff" stroke="#5a9ad8" stroke-width="0.9"/><rect x="1" y="13" width="5" height="2.5" fill="#fff" stroke="#5a9ad8" stroke-width="0.9"/></svg>
<svg class="a" style="left:876px;top:216px" width="16" height="16" viewBox="0 0 16 16"><circle cx="8" cy="8" r="7.3" fill="#2a9ae0"/><path d="M5.5 6C5.5 3.5 10.5 3.5 10.5 6C10.5 7.5 8 8 8 10" fill="none" stroke="#fff" stroke-width="2"/><circle cx="8" cy="12.5" r="1.2" fill="#fff"/></svg>
<svg class="a" style="left:911px;top:216px" width="16" height="16" viewBox="0 0 16 16"><rect x="4" y="1" width="8" height="5" fill="#fff" stroke="#555" stroke-width="0.8"/><path d="M1 7H15V13H1Z" fill="#5a5a5a"/><rect x="2" y="6" width="12" height="3" fill="#8a8a8a"/><path d="M3 12H13V15H3Z" fill="#2a8ad8"/></svg>
<svg class="a" style="left:938px;top:216px" width="16" height="16" viewBox="0 0 16 16"><path d="M1 2H5L10 8L5 14H1L6 8Z" fill="#2a7ad0"/><path d="M7 2H11L16 8L11 14H7L12 8Z" fill="#f5b818"/></svg>
<svg class="a" style="left:973px;top:216px" width="16" height="16" viewBox="0 0 16 16"><path d="M8 8C3 8 1 6 1 4.5C1 2.5 3 1 4.5 1C6 1 8 3 8 8Z M8 8C8 3 10 1 11.5 1C13 1 15 2.5 15 4.5C15 6 13 8 8 8Z M8 8C13 8 15 10 15 11.5C15 13.5 13 15 11.5 15C10 15 8 13 8 8Z M8 8C8 13 6 15 4.5 15C3 15 1 13.5 1 11.5C1 10 3 8 8 8Z" fill="#fff" stroke="#555" stroke-width="1"/></svg>
<svg class="a" style="left:1000px;top:216px" width="16" height="16" viewBox="0 0 16 16"><path d="M8 8C3 8 1 6 1 4.5C1 2.5 3 1 4.5 1C6 1 8 3 8 8Z M8 8C8 3 10 1 11.5 1C13 1 15 2.5 15 4.5C15 6 13 8 8 8Z M8 8C13 8 15 10 15 11.5C15 13.5 13 15 11.5 15C10 15 8 13 8 8Z M8 8C8 13 6 15 4.5 15C3 15 1 13.5 1 11.5C1 10 3 8 8 8Z" fill="#fff" stroke="#555" stroke-width="1"/><path d="M8 8C8 3 10 1 11.5 1C13 1 15 2.5 15 4.5C15 6 13 8 8 8Z" fill="#e03020" stroke="#555" stroke-width="1"/></svg>
<svg class="a" style="left:1027px;top:216px" width="16" height="16" viewBox="0 0 16 16"><path d="M8 8C3 8 1 6 1 4.5C1 2.5 3 1 4.5 1C6 1 8 3 8 8Z M8 8C8 3 10 1 11.5 1C13 1 15 2.5 15 4.5C15 6 13 8 8 8Z M8 8C13 8 15 10 15 11.5C15 13.5 13 15 11.5 15C10 15 8 13 8 8Z M8 8C8 13 6 15 4.5 15C3 15 1 13.5 1 11.5C1 10 3 8 8 8Z" fill="#fff" stroke="#555" stroke-width="1"/><path d="M8 8C8 3 10 1 11.5 1C13 1 15 2.5 15 4.5C15 6 13 8 8 8Z" fill="#2aa040" stroke="#555" stroke-width="1"/></svg>
<div class="a" style="left:901px;top:218px;width:1px;height:13px;background:#6a7a90"></div>
<div class="a" style="left:963px;top:218px;width:1px;height:13px;background:#6a7a90"></div>
<div class="a" style="left:1052px;top:218px;width:1px;height:13px;background:#6a7a90"></div>
<svg class="a" style="left:1062px;top:216px" width="16" height="16" viewBox="0 0 16 16"><circle cx="8" cy="8" r="7.3" fill="#1a5ac8"/><path d="M8 8C8 6 10 6 10 8C10 11 5 11 5 8C5 4 12 4 12 8C12 13 3 13 3 8" fill="none" stroke="#8ac0f0" stroke-width="1.2"/></svg>
<div class="a t" style="left:1081px;top:219px;font-size:11px;line-height:11px;font-weight:400;color:#000;letter-spacing:-0.15px;">Saldo</div>
<svg class="a" style="left:1119px;top:216px" width="16" height="16" viewBox="0 0 16 16"><circle cx="8" cy="8" r="4.5" fill="none" stroke="#d89a20" stroke-width="2"/><path d="M8 0.5V15.5M0.5 8H15.5M2.7 2.7L13.3 13.3M13.3 2.7L2.7 13.3" stroke="#d89a20" stroke-width="1.5"/><circle cx="8" cy="8" r="2" fill="#f0c040"/></svg>
<div class="a t" style="left:1138px;top:219px;font-size:11px;line-height:11px;font-weight:400;color:#000;letter-spacing:-0.15px;">CRM</div>
<svg class="a" style="left:496px;top:192px" width="14" height="14" viewBox="0 0 14 14"><rect x="0.5" y="1" width="11" height="9" fill="#fff" stroke="#7a9ac0"/><path d="M0.5 1L6 6L11.5 1" fill="none" stroke="#7a9ac0"/><rect x="7" y="7" width="6" height="6" fill="#eef" stroke="#999" stroke-width="0.7"/><rect x="10" y="2" width="3" height="3" fill="#f0c040"/></svg>
<svg class="a" style="left:221px;top:161px" width="16" height="15" viewBox="0 0 16 15"><circle cx="5" cy="4" r="2.8" fill="#e8c8a0"/><path d="M5 1.5C3 1.5 2.3 3 2.5 4H7.5C7.7 3 7 1.5 5 1.5Z" fill="#5a3a1a"/><path d="M0.5 14C0.5 8 9.5 8 9.5 14Z" fill="#1a3a7a"/><circle cx="12" cy="4" r="2.8" fill="none" stroke="#d8a020" stroke-width="1.8"/><path d="M12 6.5V14M12 11H14M12 13H14" stroke="#d8a020" stroke-width="1.8"/></svg>
<svg class="a" style="left:347px;top:161px" width="16" height="16" viewBox="0 0 16 16"><rect x="1" y="1" width="6" height="3" fill="#fff" stroke="#5a9ad8" stroke-width="0.9"/><rect x="5" y="5" width="7" height="3" fill="#fff" stroke="#5a9ad8" stroke-width="0.9"/><rect x="9" y="8" width="5" height="3" fill="#fff" stroke="#5a9ad8" stroke-width="0.9"/><rect x="4" y="10" width="6" height="3" fill="#fff" stroke="#5a9ad8" stroke-width="0.9"/><rect x="1" y="13" width="5" height="2.5" fill="#fff" stroke="#5a9ad8" stroke-width="0.9"/></svg>
<svg class="a" style="left:1850px;top:165px" width="10" height="14" viewBox="0 0 10 14"><rect x="0.5" y="0.5" width="9" height="13" fill="#fff" stroke="#222"/><rect x="1" y="1" width="8" height="3" fill="#222"/><path d="M1 6.5H9M1 9H9M1 11.5H9M3.7 4V13M6.3 4V13" stroke="#444" stroke-width="0.8"/></svg>
<div class="a t" style="left:852px;top:53px;font-size:25px;line-height:25px;font-weight:700;color:#1a9c4a;-webkit-text-stroke:0.7px #1a9c4a;transform:scaleX(1.117);transform-origin:0 0"><span style="display:inline-block;position:relative;width:12.6px;height:18px;vertical-align:baseline"><span style="position:absolute;left:0.3px;top:0;width:9.6px;height:3.4px;background:#1a9c4a"></span><span style="position:absolute;left:2.7px;top:0;width:4.8px;height:18px;background:#1a9c4a"></span><span style="position:absolute;left:0.3px;top:14.6px;width:9.6px;height:3.4px;background:#1a9c4a"></span></span>dentifikace systému</div>
<div class="a t" style="left:11px;top:135px;font-size:25px;line-height:25px;font-weight:700;color:#1a9c4a;-webkit-text-stroke:0.7px #1a9c4a;transform:scaleX(1.062);transform-origin:0 0"><span style="display:inline-block;position:relative;width:12.6px;height:18px;vertical-align:baseline"><span style="position:absolute;left:0.3px;top:0;width:9.6px;height:3.4px;background:#1a9c4a"></span><span style="position:absolute;left:2.7px;top:0;width:4.8px;height:18px;background:#1a9c4a"></span><span style="position:absolute;left:0.3px;top:14.6px;width:9.6px;height:3.4px;background:#1a9c4a"></span></span>konová</div>
<div class="a t" style="left:11px;top:164px;font-size:25px;line-height:25px;font-weight:700;color:#1a9c4a;-webkit-text-stroke:0.7px #1a9c4a;transform:scaleX(1.061);transform-origin:0 0">lišta</div>
<div class="a t" style="left:10px;top:401px;font-size:25px;line-height:25px;font-weight:700;color:#fd9f41;-webkit-text-stroke:0.7px #fd9f41;transform:scaleX(1.097);transform-origin:0 0">Nabídka</div>
<div class="a t" style="left:9px;top:430px;font-size:25px;line-height:25px;font-weight:700;color:#fd9f41;-webkit-text-stroke:0.7px #fd9f41;transform:scaleX(1.084);transform-origin:0 0">funkcí</div>
<div class="a t" style="left:17px;top:795px;font-size:25px;line-height:25px;font-weight:700;color:#1a9c4a;-webkit-text-stroke:0.7px #1a9c4a;transform:scaleX(1.095);transform-origin:0 0">Seznam</div>
<div class="a t" style="left:17px;top:824px;font-size:25px;line-height:25px;font-weight:700;color:#1a9c4a;-webkit-text-stroke:0.7px #1a9c4a;transform:scaleX(1.09);transform-origin:0 0">modulů</div>
<div class="a t" style="left:15px;top:1029px;font-size:25px;line-height:25px;font-weight:700;color:#fd9f41;-webkit-text-stroke:0.7px #fd9f41;transform:scaleX(1.113);transform-origin:0 0">Otevřená</div>
<div class="a t" style="left:15px;top:1058px;font-size:25px;line-height:25px;font-weight:700;color:#fd9f41;-webkit-text-stroke:0.7px #fd9f41;transform:scaleX(1.054);transform-origin:0 0">okna</div>
<div class="a t" style="left:15px;top:1111px;font-size:25px;line-height:25px;font-weight:700;color:#1a9c4a;-webkit-text-stroke:0.7px #1a9c4a;transform:scaleX(1.084);transform-origin:0 0">Stavová</div>
<div class="a t" style="left:15px;top:1140px;font-size:25px;line-height:25px;font-weight:700;color:#1a9c4a;-webkit-text-stroke:0.7px #1a9c4a;transform:scaleX(1.067);transform-origin:0 0">lišta</div>
<div class="a t" style="left:1281px;top:577px;font-size:25px;line-height:25px;font-weight:700;color:#1a9c4a;-webkit-text-stroke:0.7px #1a9c4a;transform:scaleX(1.117);transform-origin:0 0">Oblast pro práci s daty</div>
<svg class="a" style="left:0;top:0" width="1880" height="1210" viewBox="0 0 1880 1210">
<g stroke-linecap="round">
<line x1="837" y1="72" x2="788" y2="106" stroke="#1a9c4a" stroke-width="5"/>
<polygon points="779.4,91 779.4,113 801.7,113" fill="#1a9c4a"/>
<line x1="82" y1="177" x2="182" y2="177" stroke="#1a9c4a" stroke-width="5"/>
<polygon points="181,160 198,176 181,192" fill="#1a9c4a"/>
<line x1="104" y1="440" x2="180" y2="440" stroke="#fd9f41" stroke-width="5"/>
<polygon points="178,424 197,440 178,457" fill="#fd9f41"/>
<line x1="134" y1="808" x2="176" y2="808" stroke="#1a9c4a" stroke-width="5"/>
<polygon points="174,792 191,808 174,823" fill="#1a9c4a"/>
<line x1="103" y1="1074" x2="178" y2="1091" stroke="#fd9f41" stroke-width="5"/>
<polygon points="180,1076 193,1093 175,1106" fill="#fd9f41"/>
<line x1="88" y1="1153" x2="180" y2="1126" stroke="#1a9c4a" stroke-width="4.5"/>
<polygon points="173,1111 194,1120 186,1140" fill="#1a9c4a"/>
</g></svg>
</body></html>
